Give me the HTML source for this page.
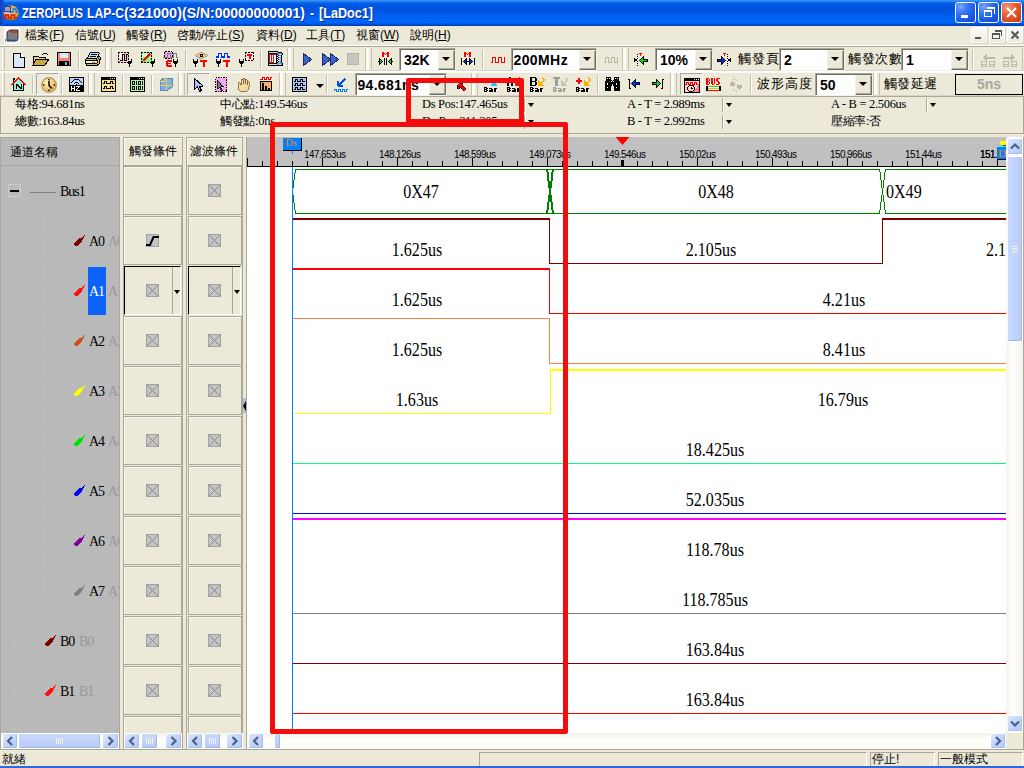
<!DOCTYPE html>
<html><head><meta charset="utf-8"><title>LAP-C</title><style>
*{margin:0;padding:0;box-sizing:border-box}
html,body{width:1024px;height:768px;overflow:hidden}
body{background:#ece9d8;position:relative;font-family:"Liberation Sans",sans-serif;font-size:12px;color:#000}
.a{position:absolute;white-space:nowrap}
.ser{font-family:"Liberation Serif",serif}
.sep{position:absolute;width:2px;border-left:1px solid #aca899;border-right:1px solid #fff}
.grip{position:absolute;width:3px;background:#fff;border-right:1px solid #c7c3b2}
.tend{position:absolute;width:1px;background:#c5c2b2}
.combo{position:absolute;background:#fff;border:1px solid;border-color:#aca899 #f4f2e8 #f4f2e8 #aca899;box-shadow:inset 1px 1px 0 #716f64}
.combo b{position:absolute;right:0;top:1px;bottom:0;width:17px;background:#ece9d8;border:1px solid;border-color:#f4f2e8 #716f64 #716f64 #f4f2e8;box-shadow:inset -1px -1px 0 #aca899}
.combo b:after{content:"";position:absolute;left:3px;top:6px;border-left:4px solid transparent;border-right:4px solid transparent;border-top:4px solid #000}
.combo i{position:absolute;left:4px;top:3px;font-style:normal;font-weight:bold;font-size:14px;line-height:16px}
.cell{position:absolute;background:#ece9d8;border:1px solid #aca899;box-shadow:inset 1px 1px 0 #fff}
.xb{position:absolute;width:13px;height:13px;background:#c3c3c3;border:1px dotted #7d7d7d}
.tl{position:absolute;font-family:"Liberation Serif",serif;font-size:14px;white-space:nowrap}
.info{position:absolute;font-family:"Liberation Serif",serif;font-size:12.5px;white-space:nowrap;letter-spacing:-0.3px}
.cjk{font-family:"Liberation Sans",sans-serif;font-size:12px}
.dd{position:absolute;width:0;height:0;border-left:4px solid transparent;border-right:4px solid transparent;border-top:4px solid #000}
.wl{position:absolute;font-family:"Liberation Serif",serif;font-size:16.5px;white-space:nowrap;transform:scaleX(.9);transform-origin:center}
.rl{position:absolute;font-family:"Liberation Sans",sans-serif;font-size:11px;letter-spacing:-0.6px;white-space:nowrap;transform:scaleX(.9);transform-origin:0 0;color:#000}
</style></head><body>
<div class="a" style="left:0;top:0;width:1024px;height:26px;background:linear-gradient(#4a94f8 0,#3088f6 1px,#0a6cf0 2.5px,#005ae6 4px,#0053dc 8px,#0055e2 12px,#0062f4 17px,#0066fb 22.5px,#0052d8 24px,#003cb0 26px)"></div>
<div class="a" style="left:0;top:0;width:4px;height:26px;background:linear-gradient(90deg,#0c3fb8,#0a55dc 3px)"></div>
<svg class="a" style="left:2px;top:4px" width="17" height="17" viewBox="0 0 17 17"><defs><radialGradient id="ball" cx="55%" cy="40%" r="60%"><stop offset="0" stop-color="#f0e070"/><stop offset=".7" stop-color="#c8a030"/><stop offset="1" stop-color="#806018"/></radialGradient></defs><circle cx="9" cy="9" r="7.8" fill="url(#ball)"/><rect x="2" y="2" width="7" height="7" fill="#404050"/><rect x="3" y="3" width="5" height="4" fill="#9898f0"/><rect x="2" y="8" width="6" height="2" fill="#c0c0c8"/><path d="M9 8h2V5h3v3h2" stroke="#1070ff" stroke-width="1.3" fill="none"/><path d="M0.5 14h3v-3h3v3h3v-3h3v3h3" stroke="#f01010" stroke-width="1.6" fill="none"/></svg>
<div class="a" style="left:22px;top:5px;color:#fff;font-weight:bold;font-size:14px;text-shadow:1px 1px 0 #0c2b8c;transform:scaleX(0.800);transform-origin:0 0">ZEROPLUS</div>
<div class="a" style="left:87px;top:5px;color:#fff;font-weight:bold;font-size:14px;text-shadow:1px 1px 0 #0c2b8c;transform:scaleX(0.865);transform-origin:0 0">LAP-C</div>
<div class="a" style="left:124px;top:5px;color:#fff;font-weight:bold;font-size:14px;text-shadow:1px 1px 0 #0c2b8c;transform:scaleX(1.035);transform-origin:0 0">(321000)</div>
<div class="a" style="left:182px;top:5px;color:#fff;font-weight:bold;font-size:14px;text-shadow:1px 1px 0 #0c2b8c;transform:scaleX(1.000);transform-origin:0 0">(S/N:00000000001)</div>
<div class="a" style="left:310px;top:5px;color:#fff;font-weight:bold;font-size:14px;text-shadow:1px 1px 0 #0c2b8c;transform:scaleX(0.857);transform-origin:0 0">-</div>
<div class="a" style="left:319px;top:5px;color:#fff;font-weight:bold;font-size:14px;text-shadow:1px 1px 0 #0c2b8c;transform:scaleX(0.901);transform-origin:0 0">[LaDoc1]</div>
<div class="a" style="left:955px;top:2px;width:21px;height:21px;border:1px solid #fff;border-radius:3px;background:radial-gradient(circle at 25% 20%,#7aa8ff 0,#3a78f4 30%,#1c5ae8 65%,#1448d0 100%)"></div>
<div class="a" style="left:978px;top:2px;width:21px;height:21px;border:1px solid #fff;border-radius:3px;background:radial-gradient(circle at 25% 20%,#7aa8ff 0,#3a78f4 30%,#1c5ae8 65%,#1448d0 100%)"></div>
<div class="a" style="left:1001px;top:2px;width:21px;height:21px;border:1px solid #fff;border-radius:3px;background:radial-gradient(circle at 30% 25%,#f0a080 0,#e8643c 35%,#d64a1e 70%,#c03c14 100%)"></div>
<div class="a" style="left:961px;top:15px;width:7px;height:3px;background:#fff"></div>
<div class="a" style="left:984px;top:10px;width:8px;height:7px;border:1px solid #fff;border-top-width:2px"></div>
<div class="a" style="left:987px;top:7px;width:8px;height:7px;border:1px solid #fff;border-top-width:2px;border-left:none;border-bottom:none"></div>
<svg class="a" style="left:1005px;top:6px" width="13" height="13" viewBox="0 0 13 13"><path d="M2 2L11 11M11 2L2 11" stroke="#fff" stroke-width="2"/></svg>
<div class="a" style="left:0;top:45px;width:1024px;height:1px;background:#fff"></div>
<div class="a" style="left:0;top:46px;width:1024px;height:1px;background:#aca899"></div>
<div class="a" style="left:4px;top:27px;width:16px;height:17px;background:#fff"></div>
<svg class="a" style="left:4px;top:27px" width="16" height="17" viewBox="0 0 16 17"><path d="M3 5l3-2h8v9l-2 2H3z" fill="#808080" stroke="#303030"/><path d="M6 3l1 2h7" stroke="#d00" fill="none"/><path d="M1 13h14" stroke="#00c" stroke-dasharray="1 2"/><path d="M1 15h14" stroke="#0cc" stroke-dasharray="1 3"/></svg>
<div class="a" style="left:25px;top:28px;font-size:12px;line-height:14px">檔案(<u>F</u>)</div>
<div class="a" style="left:75px;top:28px;font-size:12px;line-height:14px">信號(<u>U</u>)</div>
<div class="a" style="left:126px;top:28px;font-size:12px;line-height:14px">觸發(<u>R</u>)</div>
<div class="a" style="left:177px;top:28px;font-size:12px;line-height:14px">啓動/停止(<u>S</u>)</div>
<div class="a" style="left:256px;top:28px;font-size:12px;line-height:14px">資料(<u>D</u>)</div>
<div class="a" style="left:306px;top:28px;font-size:12px;line-height:14px">工具(<u>T</u>)</div>
<div class="a" style="left:356px;top:28px;font-size:12px;line-height:14px">視窗(<u>W</u>)</div>
<div class="a" style="left:410px;top:28px;font-size:12px;line-height:14px">說明(<u>H</u>)</div>
<div class="a" style="left:971px;top:27px;width:16px;height:16px;background:linear-gradient(#fbfbf8,#ece9de);border:1px solid #fff;border-radius:2px;box-shadow:1px 1px 0 #d8d4c4"></div>
<div class="a" style="left:989px;top:27px;width:16px;height:16px;background:linear-gradient(#fbfbf8,#ece9de);border:1px solid #fff;border-radius:2px;box-shadow:1px 1px 0 #d8d4c4"></div>
<div class="a" style="left:1007px;top:27px;width:16px;height:16px;background:linear-gradient(#fbfbf8,#ece9de);border:1px solid #fff;border-radius:2px;box-shadow:1px 1px 0 #d8d4c4"></div>
<div class="a" style="left:975px;top:37px;width:6px;height:2px;background:#555"></div>
<div class="a" style="left:992px;top:33px;width:8px;height:6px;border:1px solid #555;border-top-width:2px"></div>
<div class="a" style="left:995px;top:30px;width:7px;height:6px;border:1px solid #555;border-top-width:2px;border-left:none;border-bottom:none"></div>
<svg class="a" style="left:1010px;top:30px" width="10" height="10" viewBox="0 0 10 10"><path d="M1.5 1.5L8.5 8.5M8.5 1.5L1.5 8.5" stroke="#555" stroke-width="2"/></svg>
<div class="a" style="left:0;top:71px;width:1024px;height:1px;background:#fff"></div>
<div class="a" style="left:0;top:72px;width:1024px;height:1px;background:#fbfaf6"></div>
<div class="a" style="left:0;top:95px;width:1024px;height:1px;background:#d8d4c4"></div>
<div class="a" style="left:2px;top:48px;width:1px;height:22px;background:#fbfaf6"></div><div class="a" style="left:4px;top:48px;width:1px;height:22px;background:#c5c2b2"></div>
<div class="a" style="left:2px;top:73px;width:1px;height:22px;background:#fbfaf6"></div><div class="a" style="left:4px;top:73px;width:1px;height:22px;background:#c5c2b2"></div>
<div class="a" style="left:105px;top:48px;width:1px;height:22px;background:#c5c2b2"></div>
<div class="a" style="left:106px;top:48px;width:3px;height:22px;background:#fbfaf6"></div>
<div class="a" style="left:111px;top:48px;width:1px;height:22px;background:#c5c2b2"></div>
<div class="a" style="left:287px;top:48px;width:1px;height:22px;background:#c5c2b2"></div>
<div class="a" style="left:288px;top:48px;width:3px;height:22px;background:#fbfaf6"></div>
<div class="a" style="left:293px;top:48px;width:1px;height:22px;background:#c5c2b2"></div>
<div class="a" style="left:365px;top:48px;width:1px;height:22px;background:#c5c2b2"></div>
<div class="a" style="left:366px;top:48px;width:3px;height:22px;background:#fbfaf6"></div>
<div class="a" style="left:371px;top:48px;width:1px;height:22px;background:#c5c2b2"></div>
<div class="a" style="left:622px;top:48px;width:1px;height:22px;background:#c5c2b2"></div>
<div class="a" style="left:623px;top:48px;width:3px;height:22px;background:#fbfaf6"></div>
<div class="a" style="left:628px;top:48px;width:1px;height:22px;background:#c5c2b2"></div>
<div class="a" style="left:1022px;top:48px;width:1px;height:22px;background:#c5c2b2"></div>
<div class="a" style="left:78px;top:50px;width:1px;height:19px;background:#c5c2b2"></div>
<div class="a" style="left:79px;top:50px;width:1px;height:19px;background:#fff"></div>
<div class="a" style="left:185px;top:50px;width:1px;height:19px;background:#c5c2b2"></div>
<div class="a" style="left:186px;top:50px;width:1px;height:19px;background:#fff"></div>
<div class="a" style="left:260px;top:50px;width:1px;height:19px;background:#c5c2b2"></div>
<div class="a" style="left:261px;top:50px;width:1px;height:19px;background:#fff"></div>
<div class="a" style="left:482px;top:50px;width:1px;height:19px;background:#c5c2b2"></div>
<div class="a" style="left:483px;top:50px;width:1px;height:19px;background:#fff"></div>
<div class="a" style="left:972px;top:50px;width:1px;height:19px;background:#c5c2b2"></div>
<div class="a" style="left:973px;top:50px;width:1px;height:19px;background:#fff"></div>
<div class="a" style="left:0;top:70px;width:1024px;height:1px;background:#d8d4c4"></div>
<div class="a" style="left:88px;top:73px;width:1px;height:22px;background:#c5c2b2"></div>
<div class="a" style="left:89px;top:73px;width:3px;height:22px;background:#fbfaf6"></div>
<div class="a" style="left:94px;top:73px;width:1px;height:22px;background:#c5c2b2"></div>
<div class="a" style="left:178px;top:73px;width:1px;height:22px;background:#c5c2b2"></div>
<div class="a" style="left:179px;top:73px;width:3px;height:22px;background:#fbfaf6"></div>
<div class="a" style="left:184px;top:73px;width:1px;height:22px;background:#c5c2b2"></div>
<div class="a" style="left:279px;top:73px;width:1px;height:22px;background:#c5c2b2"></div>
<div class="a" style="left:280px;top:73px;width:3px;height:22px;background:#fbfaf6"></div>
<div class="a" style="left:285px;top:73px;width:1px;height:22px;background:#c5c2b2"></div>
<div class="a" style="left:471px;top:73px;width:1px;height:22px;background:#c5c2b2"></div>
<div class="a" style="left:472px;top:73px;width:3px;height:22px;background:#fbfaf6"></div>
<div class="a" style="left:477px;top:73px;width:1px;height:22px;background:#c5c2b2"></div>
<div class="a" style="left:670px;top:73px;width:1px;height:22px;background:#c5c2b2"></div>
<div class="a" style="left:671px;top:73px;width:3px;height:22px;background:#fbfaf6"></div>
<div class="a" style="left:676px;top:73px;width:1px;height:22px;background:#c5c2b2"></div>
<div class="a" style="left:873px;top:73px;width:1px;height:22px;background:#c5c2b2"></div>
<div class="a" style="left:874px;top:73px;width:3px;height:22px;background:#fbfaf6"></div>
<div class="a" style="left:879px;top:73px;width:1px;height:22px;background:#c5c2b2"></div>
<div class="a" style="left:32px;top:75px;width:1px;height:19px;background:#c5c2b2"></div>
<div class="a" style="left:33px;top:75px;width:1px;height:19px;background:#fff"></div>
<div class="a" style="left:61px;top:75px;width:1px;height:19px;background:#c5c2b2"></div>
<div class="a" style="left:62px;top:75px;width:1px;height:19px;background:#fff"></div>
<div class="a" style="left:122px;top:75px;width:1px;height:19px;background:#c5c2b2"></div>
<div class="a" style="left:123px;top:75px;width:1px;height:19px;background:#fff"></div>
<div class="a" style="left:151px;top:75px;width:1px;height:19px;background:#c5c2b2"></div>
<div class="a" style="left:152px;top:75px;width:1px;height:19px;background:#fff"></div>
<div class="a" style="left:326px;top:75px;width:1px;height:19px;background:#c5c2b2"></div>
<div class="a" style="left:327px;top:75px;width:1px;height:19px;background:#fff"></div>
<div class="a" style="left:597px;top:75px;width:1px;height:19px;background:#c5c2b2"></div>
<div class="a" style="left:598px;top:75px;width:1px;height:19px;background:#fff"></div>
<div class="a" style="left:750px;top:75px;width:1px;height:19px;background:#c5c2b2"></div>
<div class="a" style="left:751px;top:75px;width:1px;height:19px;background:#fff"></div>
<svg class="a" style="left:127px;top:59px" width="6" height="8" shape-rendering="crispEdges"><rect x="0" y="0" width="1" height="3" fill="#000"/><rect x="4" y="0" width="1" height="3" fill="#000"/><rect x="0" y="2" width="5" height="2" fill="#000"/><rect x="1" y="4" width="3" height="1" fill="#000"/><rect x="2" y="4" width="1" height="4" fill="#000"/></svg>
<svg class="a" style="left:150px;top:59px" width="6" height="8" shape-rendering="crispEdges"><rect x="0" y="0" width="1" height="3" fill="#000"/><rect x="4" y="0" width="1" height="3" fill="#000"/><rect x="0" y="2" width="5" height="2" fill="#000"/><rect x="1" y="4" width="3" height="1" fill="#000"/><rect x="2" y="4" width="1" height="4" fill="#000"/></svg>
<svg class="a" style="left:173px;top:59px" width="6" height="8" shape-rendering="crispEdges"><rect x="0" y="0" width="1" height="3" fill="#000"/><rect x="4" y="0" width="1" height="3" fill="#000"/><rect x="0" y="2" width="5" height="2" fill="#000"/><rect x="1" y="4" width="3" height="1" fill="#000"/><rect x="2" y="4" width="1" height="4" fill="#000"/></svg>
<svg class="a" style="left:193px;top:59px" width="6" height="8" shape-rendering="crispEdges"><rect x="0" y="0" width="1" height="3" fill="#000"/><rect x="4" y="0" width="1" height="3" fill="#000"/><rect x="0" y="2" width="5" height="2" fill="#000"/><rect x="1" y="4" width="3" height="1" fill="#000"/><rect x="2" y="4" width="1" height="4" fill="#000"/></svg>
<svg class="a" style="left:216px;top:59px" width="6" height="8" shape-rendering="crispEdges"><rect x="0" y="0" width="1" height="3" fill="#000"/><rect x="4" y="0" width="1" height="3" fill="#000"/><rect x="0" y="2" width="5" height="2" fill="#000"/><rect x="1" y="4" width="3" height="1" fill="#000"/><rect x="2" y="4" width="1" height="4" fill="#000"/></svg>
<svg class="a" style="left:239px;top:59px" width="6" height="8" shape-rendering="crispEdges"><rect x="0" y="0" width="1" height="3" fill="#000"/><rect x="4" y="0" width="1" height="3" fill="#000"/><rect x="0" y="2" width="5" height="2" fill="#000"/><rect x="1" y="4" width="3" height="1" fill="#000"/><rect x="2" y="4" width="1" height="4" fill="#000"/></svg>
<svg class="a" style="left:13px;top:53px" width="12" height="15" viewBox="0 0 12 15" shape-rendering="crispEdges"><path d="M0.5 0.5h7l4 4v10h-11z" fill="#dce6fb" stroke="#000"/><path d="M7.5 0.5v4h4" fill="#fff" stroke="#000"/></svg>
<svg class="a" style="left:32px;top:52px" width="18" height="14" viewBox="0 0 18 14" shape-rendering="crispEdges"><path d="M1 4h5l1 1h6v2H4L1 13z" fill="#e8d080" stroke="#000"/><path d="M4 7h13l-4 6H1z" fill="#c8a840" stroke="#000"/><path d="M10 3q3-3 6 0" stroke="#000" fill="none"/></svg>
<svg class="a" style="left:57px;top:52px" width="14" height="14" viewBox="0 0 14 14" shape-rendering="crispEdges"><rect x="0.5" y="0.5" width="13" height="13" fill="#f08080" stroke="#000"/><rect x="3" y="1" width="8" height="5" fill="#dde8f0"/><rect x="2" y="9" width="10" height="5" fill="#000"/><rect x="8" y="10" width="2" height="3" fill="#60c0e0"/></svg>
<svg class="a" style="left:85px;top:52px" width="16" height="14" shape-rendering="crispEdges"><rect x="5" y="0" width="9" height="1" fill="#000"/><rect x="4" y="1" width="1" height="1" fill="#000"/><rect x="5" y="1" width="9" height="1" fill="#b8e0f8"/><rect x="14" y="1" width="1" height="1" fill="#000"/><rect x="4" y="2" width="1" height="1" fill="#000"/><rect x="5" y="2" width="1" height="1" fill="#b8e0f8"/><rect x="6" y="2" width="6" height="1" fill="#000"/><rect x="12" y="2" width="1" height="1" fill="#b8e0f8"/><rect x="13" y="2" width="1" height="1" fill="#000"/><rect x="3" y="3" width="1" height="1" fill="#000"/><rect x="4" y="3" width="9" height="1" fill="#b8e0f8"/><rect x="13" y="3" width="1" height="1" fill="#000"/><rect x="3" y="4" width="1" height="1" fill="#000"/><rect x="4" y="4" width="1" height="1" fill="#b8e0f8"/><rect x="5" y="4" width="6" height="1" fill="#000"/><rect x="11" y="4" width="1" height="1" fill="#b8e0f8"/><rect x="12" y="4" width="3" height="1" fill="#000"/><rect x="2" y="5" width="1" height="1" fill="#000"/><rect x="3" y="5" width="9" height="1" fill="#b8e0f8"/><rect x="12" y="5" width="1" height="1" fill="#000"/><rect x="13" y="5" width="2" height="1" fill="#d0b860"/><rect x="15" y="5" width="1" height="1" fill="#000"/><rect x="1" y="6" width="11" height="1" fill="#000"/><rect x="12" y="6" width="1" height="1" fill="#d0b860"/><rect x="13" y="6" width="1" height="1" fill="#000"/><rect x="14" y="6" width="1" height="1" fill="#d0b860"/><rect x="15" y="6" width="1" height="1" fill="#000"/><rect x="0" y="7" width="1" height="1" fill="#000"/><rect x="1" y="7" width="10" height="1" fill="#d0b860"/><rect x="11" y="7" width="1" height="1" fill="#000"/><rect x="12" y="7" width="2" height="1" fill="#d0b860"/><rect x="14" y="7" width="2" height="1" fill="#000"/><rect x="0" y="8" width="13" height="1" fill="#000"/><rect x="13" y="8" width="1" height="1" fill="#d0b860"/><rect x="14" y="8" width="1" height="1" fill="#000"/><rect x="0" y="9" width="1" height="1" fill="#000"/><rect x="1" y="9" width="11" height="1" fill="#fff8d8"/><rect x="12" y="9" width="1" height="1" fill="#000"/><rect x="13" y="9" width="1" height="1" fill="#d0b860"/><rect x="14" y="9" width="1" height="1" fill="#000"/><rect x="0" y="10" width="1" height="1" fill="#000"/><rect x="1" y="10" width="6" height="1" fill="#fff8d8"/><rect x="7" y="10" width="1" height="1" fill="#10d010"/><rect x="8" y="10" width="1" height="1" fill="#d0b860"/><rect x="9" y="10" width="1" height="1" fill="#ff0000"/><rect x="10" y="10" width="2" height="1" fill="#fff8d8"/><rect x="12" y="10" width="1" height="1" fill="#000"/><rect x="13" y="10" width="1" height="1" fill="#d0b860"/><rect x="14" y="10" width="1" height="1" fill="#000"/><rect x="0" y="11" width="12" height="1" fill="#000"/><rect x="12" y="11" width="2" height="1" fill="#d0b860"/><rect x="14" y="11" width="1" height="1" fill="#000"/><rect x="1" y="12" width="1" height="1" fill="#000"/><rect x="2" y="12" width="10" height="1" fill="#d0b860"/><rect x="12" y="12" width="2" height="1" fill="#000"/><rect x="1" y="13" width="12" height="1" fill="#000"/></svg>
<svg class="a" style="left:118px;top:52px" width="11" height="11" viewBox="0 0 11 11" shape-rendering="crispEdges"><rect x="0" y="0" width="11" height="11" fill="#f8c8c8"/><rect x="1" y="1" width="5" height="5" fill="#fff0f0"/><path d="M0 0.5h11M0 10.5h11M0.5 0v11M10.5 0v11" stroke="#000" stroke-dasharray="2 1"/><path d="M2 8.5h2.5V2.5h2v6h2V2.5h1.5" stroke="#000" fill="none"/></svg>
<svg class="a" style="left:141px;top:52px" width="11" height="11" viewBox="0 0 11 11" shape-rendering="crispEdges"><rect x="0" y="0" width="11" height="11" fill="#90f090"/><rect x="1" y="1" width="5" height="4" fill="#d0ffd0"/><path d="M0 0.5h11M0 10.5h11M0.5 0v11M10.5 0v11" stroke="#000" stroke-dasharray="2 1"/><path d="M9 2L7 4" stroke="#f00" stroke-width="1.5"/><path d="M7 3L3 7 2 9 4 8 8 4z" fill="#f00" stroke="#f00"/></svg>
<svg class="a" style="left:163px;top:51px" width="16" height="16" viewBox="0 0 16 16" shape-rendering="crispEdges"><rect x="2" y="1" width="7" height="7" fill="#e8a8f8"/><path d="M2 0.5h7M2 7.5h7M1.5 1v6M9.5 1v6" stroke="#000" stroke-dasharray="2 1"/><path d="M0 6.5h4V2.5h3v4h3V2.5h3v4h2" stroke="#808080" fill="none"/><path d="M4 10h5M4 10v5M4 12.5h4M4 15h5" stroke="#f00" stroke-width="1.6" fill="none"/></svg>
<svg class="a" style="left:195px;top:52px" width="13" height="7" viewBox="0 0 13 7" shape-rendering="crispEdges"><path d="M0 3.5L6.5 0 13 3.5 6.5 7z" fill="#f8c860" stroke="#a0a0a0"/><rect x="5" y="2" width="3" height="3" fill="#000"/><rect x="6" y="3" width="1" height="1" fill="#f8c860"/></svg>
<svg class="a" style="left:200px;top:60px" width="7" height="7" viewBox="0 0 7 7" shape-rendering="crispEdges"><rect x="0" y="0" width="7" height="2" fill="#f00"/><rect x="2.5" y="0" width="2" height="7" fill="#f00"/></svg>
<svg class="a" style="left:216px;top:53px" width="14" height="5" viewBox="0 0 14 5" shape-rendering="crispEdges"><path d="M0 4h2.5V0.5h3V4h3V0.5h3V4H14" stroke="#0030ff" stroke-width="1.5" fill="none"/></svg>
<svg class="a" style="left:223px;top:60px" width="7" height="7" viewBox="0 0 7 7" shape-rendering="crispEdges"><rect x="0" y="0" width="7" height="2" fill="#f00"/><rect x="2.5" y="0" width="2" height="7" fill="#f00"/></svg>
<svg class="a" style="left:245px;top:52px" width="9" height="9" viewBox="0 0 9 9" shape-rendering="crispEdges"><rect x="0" y="0" width="9" height="9" fill="#fde8e8"/><path d="M0 0.5h9M0 8.5h9M0.5 0v9M8.5 0v9" stroke="#000" stroke-dasharray="2 1"/><rect x="2" y="2" width="5" height="2" fill="#f00"/><rect x="3.5" y="2" width="2" height="5" fill="#f00"/></svg>
<svg class="a" style="left:268px;top:51px" width="15" height="15" shape-rendering="crispEdges"><rect x="0" y="0" width="10" height="1" fill="#000"/><rect x="0" y="1" width="1" height="1" fill="#000"/><rect x="1" y="1" width="8" height="1" fill="#c8e8f8"/><rect x="9" y="1" width="1" height="1" fill="#6898d0"/><rect x="10" y="1" width="4" height="1" fill="#000"/><rect x="0" y="2" width="9" height="1" fill="#000"/><rect x="9" y="2" width="5" height="1" fill="#6898d0"/><rect x="14" y="2" width="1" height="1" fill="#000"/><rect x="0" y="3" width="1" height="1" fill="#000"/><rect x="1" y="3" width="7" height="1" fill="#ff0000"/><rect x="8" y="3" width="2" height="1" fill="#000"/><rect x="10" y="3" width="1" height="1" fill="#6898d0"/><rect x="11" y="3" width="2" height="1" fill="#c8e8f8"/><rect x="13" y="3" width="1" height="1" fill="#6898d0"/><rect x="14" y="3" width="1" height="1" fill="#000"/><rect x="0" y="4" width="1" height="1" fill="#000"/><rect x="1" y="4" width="1" height="1" fill="#ff0000"/><rect x="2" y="4" width="1" height="1" fill="#fff"/><rect x="3" y="4" width="1" height="1" fill="#ff0000"/><rect x="4" y="4" width="1" height="1" fill="#fff"/><rect x="5" y="4" width="1" height="1" fill="#ff0000"/><rect x="6" y="4" width="2" height="1" fill="#fff"/><rect x="8" y="4" width="1" height="1" fill="#000"/><rect x="10" y="4" width="1" height="1" fill="#000"/><rect x="11" y="4" width="2" height="1" fill="#6898d0"/><rect x="13" y="4" width="1" height="1" fill="#000"/><rect x="0" y="5" width="1" height="1" fill="#000"/><rect x="1" y="5" width="1" height="1" fill="#ff0000"/><rect x="2" y="5" width="1" height="1" fill="#fff"/><rect x="3" y="5" width="1" height="1" fill="#ff0000"/><rect x="4" y="5" width="1" height="1" fill="#fff"/><rect x="5" y="5" width="1" height="1" fill="#ff0000"/><rect x="6" y="5" width="2" height="1" fill="#fff"/><rect x="8" y="5" width="2" height="1" fill="#000"/><rect x="10" y="5" width="3" height="1" fill="#c8e8f8"/><rect x="13" y="5" width="1" height="1" fill="#000"/><rect x="0" y="6" width="1" height="1" fill="#000"/><rect x="1" y="6" width="1" height="1" fill="#ff0000"/><rect x="2" y="6" width="1" height="1" fill="#fff"/><rect x="3" y="6" width="1" height="1" fill="#ff0000"/><rect x="4" y="6" width="1" height="1" fill="#fff"/><rect x="5" y="6" width="1" height="1" fill="#ff0000"/><rect x="6" y="6" width="2" height="1" fill="#fff"/><rect x="8" y="6" width="1" height="1" fill="#000"/><rect x="10" y="6" width="1" height="1" fill="#000"/><rect x="11" y="6" width="2" height="1" fill="#6898d0"/><rect x="13" y="6" width="1" height="1" fill="#000"/><rect x="0" y="7" width="1" height="1" fill="#000"/><rect x="1" y="7" width="1" height="1" fill="#ff0000"/><rect x="2" y="7" width="1" height="1" fill="#fff"/><rect x="3" y="7" width="1" height="1" fill="#ff0000"/><rect x="4" y="7" width="1" height="1" fill="#fff"/><rect x="5" y="7" width="1" height="1" fill="#ff0000"/><rect x="6" y="7" width="2" height="1" fill="#fff"/><rect x="8" y="7" width="2" height="1" fill="#000"/><rect x="10" y="7" width="3" height="1" fill="#c8e8f8"/><rect x="13" y="7" width="1" height="1" fill="#000"/><rect x="0" y="8" width="1" height="1" fill="#000"/><rect x="1" y="8" width="1" height="1" fill="#ff0000"/><rect x="2" y="8" width="1" height="1" fill="#fff"/><rect x="3" y="8" width="1" height="1" fill="#ff0000"/><rect x="4" y="8" width="1" height="1" fill="#fff"/><rect x="5" y="8" width="1" height="1" fill="#ff0000"/><rect x="6" y="8" width="2" height="1" fill="#fff"/><rect x="8" y="8" width="1" height="1" fill="#000"/><rect x="10" y="8" width="1" height="1" fill="#000"/><rect x="11" y="8" width="2" height="1" fill="#6898d0"/><rect x="13" y="8" width="1" height="1" fill="#000"/><rect x="0" y="9" width="1" height="1" fill="#000"/><rect x="1" y="9" width="1" height="1" fill="#ff0000"/><rect x="2" y="9" width="1" height="1" fill="#fff"/><rect x="3" y="9" width="1" height="1" fill="#ff0000"/><rect x="4" y="9" width="1" height="1" fill="#fff"/><rect x="5" y="9" width="1" height="1" fill="#ff0000"/><rect x="6" y="9" width="2" height="1" fill="#fff"/><rect x="8" y="9" width="2" height="1" fill="#000"/><rect x="10" y="9" width="3" height="1" fill="#c8e8f8"/><rect x="13" y="9" width="1" height="1" fill="#000"/><rect x="0" y="10" width="1" height="1" fill="#000"/><rect x="1" y="10" width="1" height="1" fill="#ff0000"/><rect x="2" y="10" width="1" height="1" fill="#fff"/><rect x="3" y="10" width="1" height="1" fill="#ff0000"/><rect x="4" y="10" width="1" height="1" fill="#fff"/><rect x="5" y="10" width="1" height="1" fill="#ff0000"/><rect x="6" y="10" width="2" height="1" fill="#fff"/><rect x="8" y="10" width="1" height="1" fill="#000"/><rect x="10" y="10" width="1" height="1" fill="#000"/><rect x="11" y="10" width="2" height="1" fill="#6898d0"/><rect x="13" y="10" width="1" height="1" fill="#000"/><rect x="0" y="11" width="1" height="1" fill="#000"/><rect x="1" y="11" width="5" height="1" fill="#ff0000"/><rect x="6" y="11" width="2" height="1" fill="#fff"/><rect x="8" y="11" width="2" height="1" fill="#000"/><rect x="10" y="11" width="1" height="1" fill="#6898d0"/><rect x="11" y="11" width="1" height="1" fill="#c8e8f8"/><rect x="12" y="11" width="1" height="1" fill="#6898d0"/><rect x="13" y="11" width="1" height="1" fill="#000"/><rect x="0" y="12" width="9" height="1" fill="#000"/><rect x="9" y="12" width="5" height="1" fill="#6898d0"/><rect x="14" y="12" width="1" height="1" fill="#000"/><rect x="0" y="13" width="1" height="1" fill="#000"/><rect x="1" y="13" width="8" height="1" fill="#c8e8f8"/><rect x="9" y="13" width="2" height="1" fill="#6898d0"/><rect x="11" y="13" width="2" height="1" fill="#c8e8f8"/><rect x="13" y="13" width="1" height="1" fill="#6898d0"/><rect x="14" y="13" width="1" height="1" fill="#000"/><rect x="0" y="14" width="15" height="1" fill="#000"/></svg>
<svg class="a" style="left:303px;top:53px" width="9" height="13" viewBox="0 0 9 13" shape-rendering="crispEdges"><path d="M0.5 0.5L8.5 6.5L0.5 12.5z" fill="#3c64c8" stroke="#1a2a70"/></svg>
<svg class="a" style="left:322px;top:53px" width="18" height="13" viewBox="0 0 18 13" shape-rendering="crispEdges"><path d="M0.5 0.5L8.5 6.5L0.5 12.5z" fill="#3c64c8" stroke="#1a2a70"/><path d="M8.5 0.5L16.5 6.5L8.5 12.5z" fill="#3c64c8" stroke="#1a2a70"/></svg>
<svg class="a" style="left:347px;top:53px" width="12" height="12" viewBox="0 0 12 12" shape-rendering="crispEdges"><rect x="0.5" y="0.5" width="11" height="11" fill="#c8c6bc" stroke="#b8b6aa"/></svg>
<svg class="a" style="left:378px;top:52px" width="15" height="13" shape-rendering="crispEdges"><rect x="4" y="0" width="2" height="1" fill="#ff0000"/><rect x="9" y="0" width="2" height="1" fill="#ff0000"/><rect x="4" y="1" width="3" height="1" fill="#ff0000"/><rect x="8" y="1" width="3" height="1" fill="#ff0000"/><rect x="4" y="2" width="2" height="1" fill="#ff0000"/><rect x="7" y="2" width="1" height="1" fill="#ff0000"/><rect x="9" y="2" width="2" height="1" fill="#ff0000"/><rect x="4" y="3" width="2" height="1" fill="#ff0000"/><rect x="9" y="3" width="2" height="1" fill="#ff0000"/><rect x="4" y="4" width="2" height="1" fill="#ff0000"/><rect x="9" y="4" width="2" height="1" fill="#ff0000"/><rect x="1" y="6" width="1" height="1" fill="#000"/><rect x="6" y="6" width="1" height="1" fill="#000"/><rect x="8" y="6" width="1" height="1" fill="#000"/><rect x="13" y="6" width="1" height="1" fill="#000"/><rect x="1" y="7" width="2" height="1" fill="#000"/><rect x="6" y="7" width="1" height="1" fill="#000"/><rect x="8" y="7" width="1" height="1" fill="#000"/><rect x="12" y="7" width="2" height="1" fill="#000"/><rect x="1" y="8" width="1" height="1" fill="#000"/><rect x="2" y="8" width="1" height="1" fill="#00e000"/><rect x="3" y="8" width="1" height="1" fill="#000"/><rect x="6" y="8" width="1" height="1" fill="#000"/><rect x="8" y="8" width="1" height="1" fill="#000"/><rect x="11" y="8" width="1" height="1" fill="#000"/><rect x="12" y="8" width="1" height="1" fill="#00e000"/><rect x="13" y="8" width="1" height="1" fill="#000"/><rect x="0" y="9" width="2" height="1" fill="#000"/><rect x="2" y="9" width="2" height="1" fill="#00e000"/><rect x="4" y="9" width="1" height="1" fill="#000"/><rect x="6" y="9" width="1" height="1" fill="#000"/><rect x="8" y="9" width="1" height="1" fill="#000"/><rect x="10" y="9" width="1" height="1" fill="#000"/><rect x="11" y="9" width="2" height="1" fill="#00e000"/><rect x="13" y="9" width="2" height="1" fill="#000"/><rect x="1" y="10" width="1" height="1" fill="#000"/><rect x="2" y="10" width="1" height="1" fill="#00e000"/><rect x="3" y="10" width="1" height="1" fill="#000"/><rect x="6" y="10" width="1" height="1" fill="#000"/><rect x="8" y="10" width="1" height="1" fill="#000"/><rect x="11" y="10" width="1" height="1" fill="#000"/><rect x="12" y="10" width="1" height="1" fill="#00e000"/><rect x="13" y="10" width="1" height="1" fill="#000"/><rect x="1" y="11" width="2" height="1" fill="#000"/><rect x="6" y="11" width="1" height="1" fill="#000"/><rect x="8" y="11" width="1" height="1" fill="#000"/><rect x="12" y="11" width="2" height="1" fill="#000"/><rect x="1" y="12" width="1" height="1" fill="#000"/><rect x="6" y="12" width="1" height="1" fill="#000"/><rect x="8" y="12" width="1" height="1" fill="#000"/><rect x="13" y="12" width="1" height="1" fill="#000"/></svg>
<div class="combo" style="left:399px;top:48px;width:57px;height:23px"><i style="font-weight:bold;left:4px;letter-spacing:0px">32K</i><b></b></div>
<svg class="a" style="left:461px;top:52px" width="14" height="13" shape-rendering="crispEdges"><rect x="3" y="0" width="2" height="1" fill="#ff0000"/><rect x="8" y="0" width="2" height="1" fill="#ff0000"/><rect x="3" y="1" width="3" height="1" fill="#ff0000"/><rect x="7" y="1" width="3" height="1" fill="#ff0000"/><rect x="3" y="2" width="2" height="1" fill="#ff0000"/><rect x="6" y="2" width="1" height="1" fill="#ff0000"/><rect x="8" y="2" width="2" height="1" fill="#ff0000"/><rect x="3" y="3" width="2" height="1" fill="#ff0000"/><rect x="8" y="3" width="2" height="1" fill="#ff0000"/><rect x="3" y="4" width="2" height="1" fill="#ff0000"/><rect x="8" y="4" width="2" height="1" fill="#ff0000"/><rect x="0" y="6" width="1" height="1" fill="#000"/><rect x="5" y="6" width="1" height="1" fill="#000"/><rect x="8" y="6" width="1" height="1" fill="#000"/><rect x="13" y="6" width="1" height="1" fill="#000"/><rect x="0" y="7" width="1" height="1" fill="#000"/><rect x="4" y="7" width="2" height="1" fill="#000"/><rect x="8" y="7" width="2" height="1" fill="#000"/><rect x="13" y="7" width="1" height="1" fill="#000"/><rect x="0" y="8" width="1" height="1" fill="#000"/><rect x="3" y="8" width="1" height="1" fill="#000"/><rect x="4" y="8" width="1" height="1" fill="#0030ff"/><rect x="5" y="8" width="1" height="1" fill="#000"/><rect x="8" y="8" width="1" height="1" fill="#000"/><rect x="9" y="8" width="1" height="1" fill="#0030ff"/><rect x="10" y="8" width="1" height="1" fill="#000"/><rect x="13" y="8" width="1" height="1" fill="#000"/><rect x="0" y="9" width="1" height="1" fill="#000"/><rect x="2" y="9" width="1" height="1" fill="#000"/><rect x="3" y="9" width="2" height="1" fill="#0030ff"/><rect x="5" y="9" width="4" height="1" fill="#000"/><rect x="9" y="9" width="2" height="1" fill="#0030ff"/><rect x="11" y="9" width="1" height="1" fill="#000"/><rect x="13" y="9" width="1" height="1" fill="#000"/><rect x="0" y="10" width="1" height="1" fill="#000"/><rect x="3" y="10" width="1" height="1" fill="#000"/><rect x="4" y="10" width="1" height="1" fill="#0030ff"/><rect x="5" y="10" width="1" height="1" fill="#000"/><rect x="8" y="10" width="1" height="1" fill="#000"/><rect x="9" y="10" width="1" height="1" fill="#0030ff"/><rect x="10" y="10" width="1" height="1" fill="#000"/><rect x="13" y="10" width="1" height="1" fill="#000"/><rect x="0" y="11" width="1" height="1" fill="#000"/><rect x="4" y="11" width="2" height="1" fill="#000"/><rect x="8" y="11" width="2" height="1" fill="#000"/><rect x="13" y="11" width="1" height="1" fill="#000"/><rect x="0" y="12" width="1" height="1" fill="#000"/><rect x="5" y="12" width="1" height="1" fill="#000"/><rect x="8" y="12" width="1" height="1" fill="#000"/><rect x="13" y="12" width="1" height="1" fill="#000"/></svg>
<svg class="a" style="left:490px;top:57px" width="15" height="6" viewBox="0 0 15 6" shape-rendering="crispEdges"><path d="M0 5h2V0h3v5h3V0h3v5h3V0h1" stroke="#ff0000" fill="none" transform="translate(0.5 0.5)"/></svg>
<div class="combo" style="left:511px;top:48px;width:86px;height:23px"><i style="font-weight:bold;left:1.5px;letter-spacing:0.4px">200MHz</i><b></b></div>
<svg class="a" style="left:603px;top:57px" width="15" height="6" viewBox="0 0 15 6" shape-rendering="crispEdges"><path d="M0 5h2V0h3v5h3V0h3v5h3V0h1" stroke="#b8b6a8" fill="none" transform="translate(0.5 0.5)"/></svg>
<svg class="a" style="left:632px;top:50px" width="16" height="17" shape-rendering="crispEdges"><rect x="7" y="3" width="3" height="1" fill="#ff0000"/><rect x="5" y="4" width="1" height="1" fill="#000"/><rect x="8" y="4" width="1" height="1" fill="#ff0000"/><rect x="8" y="5" width="1" height="1" fill="#ff0000"/><rect x="5" y="6" width="1" height="1" fill="#000"/><rect x="11" y="6" width="1" height="1" fill="#000"/><rect x="10" y="7" width="2" height="1" fill="#000"/><rect x="2" y="8" width="1" height="1" fill="#000"/><rect x="5" y="8" width="1" height="1" fill="#000"/><rect x="9" y="8" width="1" height="1" fill="#000"/><rect x="10" y="8" width="1" height="1" fill="#00e000"/><rect x="11" y="8" width="1" height="1" fill="#000"/><rect x="2" y="9" width="3" height="1" fill="#000"/><rect x="8" y="9" width="1" height="1" fill="#000"/><rect x="9" y="9" width="2" height="1" fill="#00e000"/><rect x="11" y="9" width="5" height="1" fill="#000"/><rect x="2" y="10" width="3" height="1" fill="#000"/><rect x="7" y="10" width="1" height="1" fill="#000"/><rect x="8" y="10" width="7" height="1" fill="#00e000"/><rect x="15" y="10" width="1" height="1" fill="#000"/><rect x="2" y="11" width="1" height="1" fill="#000"/><rect x="5" y="11" width="1" height="1" fill="#000"/><rect x="8" y="11" width="1" height="1" fill="#000"/><rect x="9" y="11" width="2" height="1" fill="#00e000"/><rect x="11" y="11" width="5" height="1" fill="#000"/><rect x="9" y="12" width="1" height="1" fill="#000"/><rect x="10" y="12" width="1" height="1" fill="#00e000"/><rect x="11" y="12" width="1" height="1" fill="#000"/><rect x="5" y="13" width="1" height="1" fill="#000"/><rect x="10" y="13" width="2" height="1" fill="#000"/><rect x="11" y="14" width="1" height="1" fill="#000"/><rect x="5" y="15" width="1" height="1" fill="#000"/></svg>
<div class="combo" style="left:655px;top:48px;width:58px;height:23px"><i style="font-weight:bold;left:4px;letter-spacing:0px">10%</i><b></b></div>
<svg class="a" style="left:717px;top:50px" width="16" height="17" shape-rendering="crispEdges"><rect x="6" y="3" width="3" height="1" fill="#ff0000"/><rect x="7" y="4" width="1" height="1" fill="#ff0000"/><rect x="10" y="4" width="1" height="1" fill="#000"/><rect x="7" y="5" width="1" height="1" fill="#ff0000"/><rect x="4" y="6" width="1" height="1" fill="#000"/><rect x="10" y="6" width="1" height="1" fill="#000"/><rect x="4" y="7" width="2" height="1" fill="#000"/><rect x="4" y="8" width="1" height="1" fill="#000"/><rect x="5" y="8" width="1" height="1" fill="#0030ff"/><rect x="6" y="8" width="1" height="1" fill="#000"/><rect x="10" y="8" width="1" height="1" fill="#000"/><rect x="13" y="8" width="1" height="1" fill="#000"/><rect x="0" y="9" width="5" height="1" fill="#000"/><rect x="5" y="9" width="2" height="1" fill="#0030ff"/><rect x="7" y="9" width="1" height="1" fill="#000"/><rect x="11" y="9" width="3" height="1" fill="#000"/><rect x="0" y="10" width="1" height="1" fill="#000"/><rect x="1" y="10" width="7" height="1" fill="#0030ff"/><rect x="8" y="10" width="1" height="1" fill="#000"/><rect x="11" y="10" width="3" height="1" fill="#000"/><rect x="0" y="11" width="5" height="1" fill="#000"/><rect x="5" y="11" width="2" height="1" fill="#0030ff"/><rect x="7" y="11" width="1" height="1" fill="#000"/><rect x="10" y="11" width="1" height="1" fill="#000"/><rect x="13" y="11" width="1" height="1" fill="#000"/><rect x="4" y="12" width="1" height="1" fill="#000"/><rect x="5" y="12" width="1" height="1" fill="#0030ff"/><rect x="6" y="12" width="1" height="1" fill="#000"/><rect x="4" y="13" width="2" height="1" fill="#000"/><rect x="10" y="13" width="1" height="1" fill="#000"/><rect x="4" y="14" width="1" height="1" fill="#000"/><rect x="10" y="15" width="1" height="1" fill="#000"/></svg>
<div class="a" style="left:738px;top:52px;font-size:13px;line-height:14px;letter-spacing:0.8px">觸發頁</div>
<div class="combo" style="left:779px;top:48px;width:66px;height:23px"><i style="font-weight:bold;left:4px;letter-spacing:0px">2</i><b></b></div>
<div class="a" style="left:848px;top:52px;font-size:13px;line-height:14px;letter-spacing:0.7px">觸發次數</div>
<div class="combo" style="left:901px;top:48px;width:68px;height:23px"><i style="font-weight:bold;left:4px;letter-spacing:0px">1</i><b></b></div>
<svg class="a" style="left:981px;top:54px" width="14" height="13" shape-rendering="crispEdges"><rect x="5" y="0" width="1" height="1" fill="#bcbab0"/><rect x="4" y="1" width="2" height="1" fill="#bcbab0"/><rect x="3" y="2" width="3" height="1" fill="#bcbab0"/><rect x="2" y="3" width="12" height="1" fill="#bcbab0"/><rect x="3" y="4" width="11" height="1" fill="#bcbab0"/><rect x="4" y="5" width="2" height="1" fill="#bcbab0"/><rect x="5" y="6" width="1" height="1" fill="#bcbab0"/><rect x="0" y="7" width="6" height="1" fill="#bcbab0"/><rect x="8" y="7" width="6" height="1" fill="#bcbab0"/><rect x="0" y="8" width="1" height="1" fill="#bcbab0"/><rect x="5" y="8" width="1" height="1" fill="#bcbab0"/><rect x="8" y="8" width="1" height="1" fill="#bcbab0"/><rect x="13" y="8" width="1" height="1" fill="#bcbab0"/><rect x="0" y="9" width="1" height="1" fill="#bcbab0"/><rect x="5" y="9" width="1" height="1" fill="#bcbab0"/><rect x="8" y="9" width="1" height="1" fill="#bcbab0"/><rect x="13" y="9" width="1" height="1" fill="#bcbab0"/><rect x="0" y="10" width="6" height="1" fill="#bcbab0"/><rect x="8" y="10" width="6" height="1" fill="#bcbab0"/><rect x="0" y="11" width="1" height="1" fill="#bcbab0"/><rect x="5" y="11" width="1" height="1" fill="#bcbab0"/><rect x="8" y="11" width="1" height="1" fill="#bcbab0"/><rect x="13" y="11" width="1" height="1" fill="#bcbab0"/><rect x="0" y="12" width="6" height="1" fill="#bcbab0"/><rect x="8" y="12" width="6" height="1" fill="#bcbab0"/></svg>
<svg class="a" style="left:1003px;top:54px" width="14" height="13" shape-rendering="crispEdges"><rect x="8" y="0" width="1" height="1" fill="#bcbab0"/><rect x="8" y="1" width="2" height="1" fill="#bcbab0"/><rect x="8" y="2" width="3" height="1" fill="#bcbab0"/><rect x="0" y="3" width="12" height="1" fill="#bcbab0"/><rect x="0" y="4" width="11" height="1" fill="#bcbab0"/><rect x="8" y="5" width="2" height="1" fill="#bcbab0"/><rect x="8" y="6" width="1" height="1" fill="#bcbab0"/><rect x="0" y="7" width="6" height="1" fill="#bcbab0"/><rect x="8" y="7" width="6" height="1" fill="#bcbab0"/><rect x="0" y="8" width="1" height="1" fill="#bcbab0"/><rect x="5" y="8" width="1" height="1" fill="#bcbab0"/><rect x="8" y="8" width="1" height="1" fill="#bcbab0"/><rect x="13" y="8" width="1" height="1" fill="#bcbab0"/><rect x="0" y="9" width="1" height="1" fill="#bcbab0"/><rect x="5" y="9" width="1" height="1" fill="#bcbab0"/><rect x="8" y="9" width="1" height="1" fill="#bcbab0"/><rect x="13" y="9" width="1" height="1" fill="#bcbab0"/><rect x="0" y="10" width="6" height="1" fill="#bcbab0"/><rect x="8" y="10" width="6" height="1" fill="#bcbab0"/><rect x="0" y="11" width="1" height="1" fill="#bcbab0"/><rect x="5" y="11" width="1" height="1" fill="#bcbab0"/><rect x="8" y="11" width="1" height="1" fill="#bcbab0"/><rect x="13" y="11" width="1" height="1" fill="#bcbab0"/><rect x="0" y="12" width="6" height="1" fill="#bcbab0"/><rect x="8" y="12" width="6" height="1" fill="#bcbab0"/></svg>
<svg class="a" style="left:10px;top:77px" width="17" height="14" shape-rendering="crispEdges"><rect x="8" y="0" width="1" height="1" fill="#ff0000"/><rect x="3" y="1" width="2" height="1" fill="#000"/><rect x="7" y="1" width="3" height="1" fill="#ff0000"/><rect x="3" y="2" width="2" height="1" fill="#000"/><rect x="6" y="2" width="2" height="1" fill="#ff0000"/><rect x="8" y="2" width="1" height="1" fill="#90f0d8"/><rect x="9" y="2" width="2" height="1" fill="#ff0000"/><rect x="3" y="3" width="1" height="1" fill="#000"/><rect x="5" y="3" width="2" height="1" fill="#ff0000"/><rect x="7" y="3" width="3" height="1" fill="#90f0d8"/><rect x="10" y="3" width="2" height="1" fill="#ff0000"/><rect x="3" y="4" width="1" height="1" fill="#000"/><rect x="4" y="4" width="2" height="1" fill="#ff0000"/><rect x="6" y="4" width="5" height="1" fill="#90f0d8"/><rect x="11" y="4" width="2" height="1" fill="#ff0000"/><rect x="3" y="5" width="2" height="1" fill="#ff0000"/><rect x="5" y="5" width="7" height="1" fill="#90f0d8"/><rect x="12" y="5" width="2" height="1" fill="#ff0000"/><rect x="2" y="6" width="2" height="1" fill="#ff0000"/><rect x="4" y="6" width="9" height="1" fill="#90f0d8"/><rect x="13" y="6" width="2" height="1" fill="#ff0000"/><rect x="1" y="7" width="2" height="1" fill="#ff0000"/><rect x="3" y="7" width="1" height="1" fill="#000"/><rect x="4" y="7" width="2" height="1" fill="#90f0d8"/><rect x="6" y="7" width="2" height="1" fill="#000"/><rect x="8" y="7" width="3" height="1" fill="#90f0d8"/><rect x="11" y="7" width="1" height="1" fill="#000"/><rect x="12" y="7" width="1" height="1" fill="#90f0d8"/><rect x="13" y="7" width="1" height="1" fill="#000"/><rect x="14" y="7" width="2" height="1" fill="#ff0000"/><rect x="3" y="8" width="1" height="1" fill="#000"/><rect x="4" y="8" width="2" height="1" fill="#90f0d8"/><rect x="6" y="8" width="3" height="1" fill="#000"/><rect x="9" y="8" width="2" height="1" fill="#90f0d8"/><rect x="11" y="8" width="1" height="1" fill="#000"/><rect x="12" y="8" width="1" height="1" fill="#90f0d8"/><rect x="13" y="8" width="1" height="1" fill="#000"/><rect x="3" y="9" width="1" height="1" fill="#000"/><rect x="4" y="9" width="2" height="1" fill="#90f0d8"/><rect x="6" y="9" width="1" height="1" fill="#000"/><rect x="7" y="9" width="1" height="1" fill="#90f0d8"/><rect x="8" y="9" width="2" height="1" fill="#000"/><rect x="10" y="9" width="1" height="1" fill="#90f0d8"/><rect x="11" y="9" width="1" height="1" fill="#000"/><rect x="12" y="9" width="1" height="1" fill="#90f0d8"/><rect x="13" y="9" width="1" height="1" fill="#000"/><rect x="3" y="10" width="1" height="1" fill="#000"/><rect x="4" y="10" width="2" height="1" fill="#90f0d8"/><rect x="6" y="10" width="1" height="1" fill="#000"/><rect x="7" y="10" width="2" height="1" fill="#90f0d8"/><rect x="9" y="10" width="3" height="1" fill="#000"/><rect x="12" y="10" width="1" height="1" fill="#90f0d8"/><rect x="13" y="10" width="1" height="1" fill="#000"/><rect x="3" y="11" width="1" height="1" fill="#000"/><rect x="4" y="11" width="2" height="1" fill="#90f0d8"/><rect x="6" y="11" width="1" height="1" fill="#000"/><rect x="7" y="11" width="3" height="1" fill="#90f0d8"/><rect x="10" y="11" width="2" height="1" fill="#000"/><rect x="12" y="11" width="1" height="1" fill="#90f0d8"/><rect x="13" y="11" width="1" height="1" fill="#000"/><rect x="3" y="12" width="1" height="1" fill="#000"/><rect x="4" y="12" width="9" height="1" fill="#90f0d8"/><rect x="13" y="12" width="1" height="1" fill="#000"/><rect x="3" y="13" width="11" height="1" fill="#000"/></svg>
<div class="a" style="left:36px;top:73px;width:23px;height:22px;border:1px solid;border-color:#aca899 #fff #fff #aca899;background:repeating-conic-gradient(#f4f3ee 0 25%,#e6e3d6 0 50%) 0 0/2px 2px"></div>
<svg class="a" style="left:41px;top:77px" width="16" height="16" viewBox="0 0 16 16"><defs><radialGradient id="clk" cx="40%" cy="35%" r="65%"><stop offset="0" stop-color="#fff4c8"/><stop offset="1" stop-color="#e0b050"/></radialGradient></defs><circle cx="8" cy="8" r="7.3" fill="url(#clk)" stroke="#b89858" stroke-width="1.2"/><rect x="7.3" y="2" width="1.4" height="1.4"/><rect x="7.3" y="12.6" width="1.4" height="1.4"/><rect x="2" y="7.3" width="1.4" height="1.4"/><rect x="12.6" y="7.3" width="1.4" height="1.4"/><path d="M8 4v4.5l3 3" stroke="#000" stroke-width="1.5" fill="none"/></svg>
<svg class="a" style="left:69px;top:77px" width="15" height="15" shape-rendering="crispEdges"><rect x="0" y="0" width="15" height="1" fill="#000"/><rect x="0" y="1" width="1" height="1" fill="#000"/><rect x="1" y="1" width="13" height="1" fill="#b8d4f8"/><rect x="14" y="1" width="1" height="1" fill="#000"/><rect x="0" y="2" width="1" height="1" fill="#000"/><rect x="1" y="2" width="4" height="1" fill="#b8d4f8"/><rect x="5" y="2" width="5" height="1" fill="#000"/><rect x="10" y="2" width="4" height="1" fill="#b8d4f8"/><rect x="14" y="2" width="1" height="1" fill="#000"/><rect x="0" y="3" width="1" height="1" fill="#000"/><rect x="1" y="3" width="3" height="1" fill="#b8d4f8"/><rect x="4" y="3" width="1" height="1" fill="#000"/><rect x="5" y="3" width="5" height="1" fill="#b8d4f8"/><rect x="10" y="3" width="1" height="1" fill="#000"/><rect x="11" y="3" width="3" height="1" fill="#b8d4f8"/><rect x="14" y="3" width="1" height="1" fill="#000"/><rect x="0" y="4" width="1" height="1" fill="#000"/><rect x="1" y="4" width="2" height="1" fill="#b8d4f8"/><rect x="3" y="4" width="1" height="1" fill="#000"/><rect x="4" y="4" width="7" height="1" fill="#b8d4f8"/><rect x="11" y="4" width="1" height="1" fill="#000"/><rect x="12" y="4" width="2" height="1" fill="#b8d4f8"/><rect x="14" y="4" width="1" height="1" fill="#000"/><rect x="0" y="5" width="1" height="1" fill="#000"/><rect x="1" y="5" width="1" height="1" fill="#b8d4f8"/><rect x="2" y="5" width="1" height="1" fill="#000"/><rect x="3" y="5" width="3" height="1" fill="#b8d4f8"/><rect x="6" y="5" width="3" height="1" fill="#000"/><rect x="9" y="5" width="3" height="1" fill="#b8d4f8"/><rect x="12" y="5" width="1" height="1" fill="#000"/><rect x="13" y="5" width="1" height="1" fill="#b8d4f8"/><rect x="14" y="5" width="1" height="1" fill="#000"/><rect x="0" y="6" width="1" height="1" fill="#000"/><rect x="1" y="6" width="4" height="1" fill="#b8d4f8"/><rect x="5" y="6" width="1" height="1" fill="#000"/><rect x="6" y="6" width="3" height="1" fill="#b8d4f8"/><rect x="9" y="6" width="1" height="1" fill="#000"/><rect x="10" y="6" width="4" height="1" fill="#b8d4f8"/><rect x="14" y="6" width="1" height="1" fill="#000"/><rect x="0" y="7" width="1" height="1" fill="#000"/><rect x="1" y="7" width="6" height="1" fill="#b8d4f8"/><rect x="7" y="7" width="1" height="1" fill="#000"/><rect x="8" y="7" width="6" height="1" fill="#b8d4f8"/><rect x="14" y="7" width="1" height="1" fill="#000"/><rect x="0" y="8" width="15" height="1" fill="#000"/><rect x="0" y="9" width="2" height="1" fill="#000"/><rect x="2" y="9" width="1" height="1" fill="#fff"/><rect x="3" y="9" width="2" height="1" fill="#000"/><rect x="5" y="9" width="1" height="1" fill="#fff"/><rect x="6" y="9" width="1" height="1" fill="#000"/><rect x="7" y="9" width="4" height="1" fill="#fff"/><rect x="11" y="9" width="4" height="1" fill="#000"/><rect x="0" y="10" width="2" height="1" fill="#000"/><rect x="2" y="10" width="1" height="1" fill="#fff"/><rect x="3" y="10" width="2" height="1" fill="#000"/><rect x="5" y="10" width="1" height="1" fill="#fff"/><rect x="6" y="10" width="3" height="1" fill="#000"/><rect x="9" y="10" width="1" height="1" fill="#fff"/><rect x="10" y="10" width="5" height="1" fill="#000"/><rect x="0" y="11" width="2" height="1" fill="#000"/><rect x="2" y="11" width="4" height="1" fill="#fff"/><rect x="6" y="11" width="2" height="1" fill="#000"/><rect x="8" y="11" width="1" height="1" fill="#fff"/><rect x="9" y="11" width="6" height="1" fill="#000"/><rect x="0" y="12" width="2" height="1" fill="#000"/><rect x="2" y="12" width="1" height="1" fill="#fff"/><rect x="3" y="12" width="2" height="1" fill="#000"/><rect x="5" y="12" width="1" height="1" fill="#fff"/><rect x="6" y="12" width="1" height="1" fill="#000"/><rect x="7" y="12" width="1" height="1" fill="#fff"/><rect x="8" y="12" width="7" height="1" fill="#000"/><rect x="0" y="13" width="2" height="1" fill="#000"/><rect x="2" y="13" width="1" height="1" fill="#fff"/><rect x="3" y="13" width="2" height="1" fill="#000"/><rect x="5" y="13" width="1" height="1" fill="#fff"/><rect x="6" y="13" width="1" height="1" fill="#000"/><rect x="7" y="13" width="4" height="1" fill="#fff"/><rect x="11" y="13" width="4" height="1" fill="#000"/><rect x="0" y="14" width="15" height="1" fill="#000"/></svg>
<svg class="a" style="left:101px;top:77px" width="15" height="15" shape-rendering="crispEdges"><rect x="0" y="0" width="15" height="1" fill="#000"/><rect x="0" y="1" width="9" height="1" fill="#000"/><rect x="9" y="1" width="1" height="1" fill="#fff"/><rect x="10" y="1" width="1" height="1" fill="#000"/><rect x="11" y="1" width="1" height="1" fill="#fff"/><rect x="12" y="1" width="1" height="1" fill="#000"/><rect x="13" y="1" width="1" height="1" fill="#fff"/><rect x="14" y="1" width="1" height="1" fill="#000"/><rect x="0" y="2" width="15" height="1" fill="#000"/><rect x="0" y="3" width="1" height="1" fill="#000"/><rect x="1" y="3" width="13" height="1" fill="#f8e088"/><rect x="14" y="3" width="1" height="1" fill="#000"/><rect x="0" y="4" width="1" height="1" fill="#000"/><rect x="1" y="4" width="2" height="1" fill="#f8e088"/><rect x="3" y="4" width="3" height="1" fill="#000"/><rect x="6" y="4" width="3" height="1" fill="#f8e088"/><rect x="9" y="4" width="3" height="1" fill="#000"/><rect x="12" y="4" width="2" height="1" fill="#f8e088"/><rect x="14" y="4" width="1" height="1" fill="#000"/><rect x="0" y="5" width="1" height="1" fill="#000"/><rect x="1" y="5" width="2" height="1" fill="#f8e088"/><rect x="3" y="5" width="1" height="1" fill="#000"/><rect x="4" y="5" width="1" height="1" fill="#f8e088"/><rect x="5" y="5" width="1" height="1" fill="#000"/><rect x="6" y="5" width="3" height="1" fill="#f8e088"/><rect x="9" y="5" width="1" height="1" fill="#000"/><rect x="10" y="5" width="1" height="1" fill="#f8e088"/><rect x="11" y="5" width="1" height="1" fill="#000"/><rect x="12" y="5" width="2" height="1" fill="#f8e088"/><rect x="14" y="5" width="1" height="1" fill="#000"/><rect x="0" y="6" width="1" height="1" fill="#000"/><rect x="1" y="6" width="1" height="1" fill="#f8e088"/><rect x="2" y="6" width="2" height="1" fill="#000"/><rect x="4" y="6" width="1" height="1" fill="#f8e088"/><rect x="5" y="6" width="5" height="1" fill="#000"/><rect x="10" y="6" width="1" height="1" fill="#f8e088"/><rect x="11" y="6" width="2" height="1" fill="#000"/><rect x="13" y="6" width="1" height="1" fill="#f8e088"/><rect x="14" y="6" width="1" height="1" fill="#000"/><rect x="0" y="7" width="1" height="1" fill="#000"/><rect x="1" y="7" width="13" height="1" fill="#f8e088"/><rect x="14" y="7" width="1" height="1" fill="#000"/><rect x="0" y="8" width="1" height="1" fill="#000"/><rect x="1" y="8" width="13" height="1" fill="#f8e088"/><rect x="14" y="8" width="1" height="1" fill="#000"/><rect x="0" y="9" width="1" height="1" fill="#000"/><rect x="1" y="9" width="2" height="1" fill="#f8e088"/><rect x="3" y="9" width="3" height="1" fill="#000"/><rect x="6" y="9" width="3" height="1" fill="#f8e088"/><rect x="9" y="9" width="3" height="1" fill="#000"/><rect x="12" y="9" width="2" height="1" fill="#f8e088"/><rect x="14" y="9" width="1" height="1" fill="#000"/><rect x="0" y="10" width="1" height="1" fill="#000"/><rect x="1" y="10" width="2" height="1" fill="#f8e088"/><rect x="3" y="10" width="1" height="1" fill="#000"/><rect x="4" y="10" width="1" height="1" fill="#f8e088"/><rect x="5" y="10" width="1" height="1" fill="#000"/><rect x="6" y="10" width="3" height="1" fill="#f8e088"/><rect x="9" y="10" width="1" height="1" fill="#000"/><rect x="10" y="10" width="1" height="1" fill="#f8e088"/><rect x="11" y="10" width="1" height="1" fill="#000"/><rect x="12" y="10" width="2" height="1" fill="#f8e088"/><rect x="14" y="10" width="1" height="1" fill="#000"/><rect x="0" y="11" width="1" height="1" fill="#000"/><rect x="1" y="11" width="1" height="1" fill="#f8e088"/><rect x="2" y="11" width="2" height="1" fill="#000"/><rect x="4" y="11" width="1" height="1" fill="#f8e088"/><rect x="5" y="11" width="5" height="1" fill="#000"/><rect x="10" y="11" width="1" height="1" fill="#f8e088"/><rect x="11" y="11" width="2" height="1" fill="#000"/><rect x="13" y="11" width="1" height="1" fill="#f8e088"/><rect x="14" y="11" width="1" height="1" fill="#000"/><rect x="0" y="12" width="1" height="1" fill="#000"/><rect x="1" y="12" width="13" height="1" fill="#f8e088"/><rect x="14" y="12" width="1" height="1" fill="#000"/><rect x="0" y="13" width="1" height="1" fill="#000"/><rect x="1" y="13" width="13" height="1" fill="#f8e088"/><rect x="14" y="13" width="1" height="1" fill="#000"/><rect x="0" y="14" width="15" height="1" fill="#000"/></svg>
<svg class="a" style="left:130px;top:77px" width="15" height="15" shape-rendering="crispEdges"><rect x="0" y="0" width="15" height="1" fill="#000"/><rect x="0" y="1" width="9" height="1" fill="#000"/><rect x="9" y="1" width="1" height="1" fill="#fff"/><rect x="10" y="1" width="1" height="1" fill="#000"/><rect x="11" y="1" width="1" height="1" fill="#fff"/><rect x="12" y="1" width="1" height="1" fill="#000"/><rect x="13" y="1" width="1" height="1" fill="#fff"/><rect x="14" y="1" width="1" height="1" fill="#000"/><rect x="0" y="2" width="15" height="1" fill="#000"/><rect x="0" y="3" width="1" height="1" fill="#000"/><rect x="1" y="3" width="13" height="1" fill="#a8f8a0"/><rect x="14" y="3" width="1" height="1" fill="#000"/><rect x="0" y="4" width="1" height="1" fill="#000"/><rect x="1" y="4" width="1" height="1" fill="#a8f8a0"/><rect x="2" y="4" width="3" height="1" fill="#000"/><rect x="5" y="4" width="1" height="1" fill="#a8f8a0"/><rect x="6" y="4" width="1" height="1" fill="#000"/><rect x="7" y="4" width="1" height="1" fill="#a8f8a0"/><rect x="8" y="4" width="3" height="1" fill="#000"/><rect x="11" y="4" width="1" height="1" fill="#a8f8a0"/><rect x="12" y="4" width="1" height="1" fill="#000"/><rect x="13" y="4" width="1" height="1" fill="#a8f8a0"/><rect x="14" y="4" width="1" height="1" fill="#000"/><rect x="0" y="5" width="1" height="1" fill="#000"/><rect x="1" y="5" width="1" height="1" fill="#a8f8a0"/><rect x="2" y="5" width="1" height="1" fill="#000"/><rect x="3" y="5" width="1" height="1" fill="#a8f8a0"/><rect x="4" y="5" width="1" height="1" fill="#000"/><rect x="5" y="5" width="1" height="1" fill="#a8f8a0"/><rect x="6" y="5" width="1" height="1" fill="#000"/><rect x="7" y="5" width="1" height="1" fill="#a8f8a0"/><rect x="8" y="5" width="1" height="1" fill="#000"/><rect x="9" y="5" width="1" height="1" fill="#a8f8a0"/><rect x="10" y="5" width="1" height="1" fill="#000"/><rect x="11" y="5" width="1" height="1" fill="#a8f8a0"/><rect x="12" y="5" width="1" height="1" fill="#000"/><rect x="13" y="5" width="1" height="1" fill="#a8f8a0"/><rect x="14" y="5" width="1" height="1" fill="#000"/><rect x="0" y="6" width="1" height="1" fill="#000"/><rect x="1" y="6" width="1" height="1" fill="#a8f8a0"/><rect x="2" y="6" width="1" height="1" fill="#000"/><rect x="3" y="6" width="1" height="1" fill="#a8f8a0"/><rect x="4" y="6" width="1" height="1" fill="#000"/><rect x="5" y="6" width="1" height="1" fill="#a8f8a0"/><rect x="6" y="6" width="1" height="1" fill="#000"/><rect x="7" y="6" width="1" height="1" fill="#a8f8a0"/><rect x="8" y="6" width="1" height="1" fill="#000"/><rect x="9" y="6" width="1" height="1" fill="#a8f8a0"/><rect x="10" y="6" width="1" height="1" fill="#000"/><rect x="11" y="6" width="1" height="1" fill="#a8f8a0"/><rect x="12" y="6" width="1" height="1" fill="#000"/><rect x="13" y="6" width="1" height="1" fill="#a8f8a0"/><rect x="14" y="6" width="1" height="1" fill="#000"/><rect x="0" y="7" width="1" height="1" fill="#000"/><rect x="1" y="7" width="1" height="1" fill="#a8f8a0"/><rect x="2" y="7" width="3" height="1" fill="#000"/><rect x="5" y="7" width="1" height="1" fill="#a8f8a0"/><rect x="6" y="7" width="1" height="1" fill="#000"/><rect x="7" y="7" width="1" height="1" fill="#a8f8a0"/><rect x="8" y="7" width="3" height="1" fill="#000"/><rect x="11" y="7" width="1" height="1" fill="#a8f8a0"/><rect x="12" y="7" width="1" height="1" fill="#000"/><rect x="13" y="7" width="1" height="1" fill="#a8f8a0"/><rect x="14" y="7" width="1" height="1" fill="#000"/><rect x="0" y="8" width="1" height="1" fill="#000"/><rect x="1" y="8" width="13" height="1" fill="#a8f8a0"/><rect x="14" y="8" width="1" height="1" fill="#000"/><rect x="0" y="9" width="1" height="1" fill="#000"/><rect x="1" y="9" width="1" height="1" fill="#a8f8a0"/><rect x="2" y="9" width="3" height="1" fill="#000"/><rect x="5" y="9" width="1" height="1" fill="#a8f8a0"/><rect x="6" y="9" width="1" height="1" fill="#000"/><rect x="7" y="9" width="1" height="1" fill="#a8f8a0"/><rect x="8" y="9" width="3" height="1" fill="#000"/><rect x="11" y="9" width="1" height="1" fill="#a8f8a0"/><rect x="12" y="9" width="1" height="1" fill="#000"/><rect x="13" y="9" width="1" height="1" fill="#a8f8a0"/><rect x="14" y="9" width="1" height="1" fill="#000"/><rect x="0" y="10" width="1" height="1" fill="#000"/><rect x="1" y="10" width="1" height="1" fill="#a8f8a0"/><rect x="2" y="10" width="1" height="1" fill="#000"/><rect x="3" y="10" width="1" height="1" fill="#a8f8a0"/><rect x="4" y="10" width="1" height="1" fill="#000"/><rect x="5" y="10" width="1" height="1" fill="#a8f8a0"/><rect x="6" y="10" width="1" height="1" fill="#000"/><rect x="7" y="10" width="1" height="1" fill="#a8f8a0"/><rect x="8" y="10" width="1" height="1" fill="#000"/><rect x="9" y="10" width="1" height="1" fill="#a8f8a0"/><rect x="10" y="10" width="1" height="1" fill="#000"/><rect x="11" y="10" width="1" height="1" fill="#a8f8a0"/><rect x="12" y="10" width="1" height="1" fill="#000"/><rect x="13" y="10" width="1" height="1" fill="#a8f8a0"/><rect x="14" y="10" width="1" height="1" fill="#000"/><rect x="0" y="11" width="1" height="1" fill="#000"/><rect x="1" y="11" width="1" height="1" fill="#a8f8a0"/><rect x="2" y="11" width="1" height="1" fill="#000"/><rect x="3" y="11" width="1" height="1" fill="#a8f8a0"/><rect x="4" y="11" width="1" height="1" fill="#000"/><rect x="5" y="11" width="1" height="1" fill="#a8f8a0"/><rect x="6" y="11" width="1" height="1" fill="#000"/><rect x="7" y="11" width="1" height="1" fill="#a8f8a0"/><rect x="8" y="11" width="1" height="1" fill="#000"/><rect x="9" y="11" width="1" height="1" fill="#a8f8a0"/><rect x="10" y="11" width="1" height="1" fill="#000"/><rect x="11" y="11" width="1" height="1" fill="#a8f8a0"/><rect x="12" y="11" width="1" height="1" fill="#000"/><rect x="13" y="11" width="1" height="1" fill="#a8f8a0"/><rect x="14" y="11" width="1" height="1" fill="#000"/><rect x="0" y="12" width="1" height="1" fill="#000"/><rect x="1" y="12" width="1" height="1" fill="#a8f8a0"/><rect x="2" y="12" width="3" height="1" fill="#000"/><rect x="5" y="12" width="1" height="1" fill="#a8f8a0"/><rect x="6" y="12" width="1" height="1" fill="#000"/><rect x="7" y="12" width="1" height="1" fill="#a8f8a0"/><rect x="8" y="12" width="3" height="1" fill="#000"/><rect x="11" y="12" width="1" height="1" fill="#a8f8a0"/><rect x="12" y="12" width="1" height="1" fill="#000"/><rect x="13" y="12" width="1" height="1" fill="#a8f8a0"/><rect x="14" y="12" width="1" height="1" fill="#000"/><rect x="0" y="13" width="1" height="1" fill="#000"/><rect x="1" y="13" width="13" height="1" fill="#a8f8a0"/><rect x="14" y="13" width="1" height="1" fill="#000"/><rect x="0" y="14" width="15" height="1" fill="#000"/></svg>
<svg class="a" style="left:159px;top:77px" width="14" height="14" viewBox="0 0 14 14" shape-rendering="crispEdges"><path d="M1 4l4-3h8v9l-4 3H1z" fill="#80b0e8" stroke="#5a88c0"/><path d="M1 8h12M7 1v12M5 1v3H1" stroke="#f0d040" fill="none"/></svg>
<div class="a" style="left:187px;top:73px;width:23px;height:22px;border:1px solid;border-color:#aca899 #fff #fff #aca899;background:repeating-conic-gradient(#f4f3ee 0 25%,#e6e3d6 0 50%) 0 0/2px 2px"></div>
<svg class="a" style="left:193px;top:77px" width="10" height="15" viewBox="0 0 10 15" shape-rendering="crispEdges"><path d="M1.5 1.5v11l3-3 2 5 2-1-2-4h4z" fill="#a8c0f0" stroke="#000"/></svg>
<svg class="a" style="left:215px;top:77px" width="12" height="15" viewBox="0 0 12 15" shape-rendering="crispEdges"><rect x="0.5" y="0.5" width="11" height="14" fill="#f0a8f0" stroke="#000" stroke-dasharray="1.5 1"/><path d="M2.5 2.5v9l2-2 2 4 1-1-2-3h3z" fill="#808080" stroke="#000" stroke-width=".8"/></svg>
<svg class="a" style="left:237px;top:77px" width="15" height="15" viewBox="0 0 15 15" shape-rendering="crispEdges"><path d="M3 14q-3-5-2-8 1-1 2 0l1 2V3q0-1 1-1t1 1v4V2q0-1 1-1t1 1v5V3q0-1 1-1t1 1v5V5q0-1 1-1t1 1v5q0 4-3 5z" fill="#f0d8a0" stroke="#806030" stroke-width=".8"/></svg>
<svg class="a" style="left:260px;top:76px" width="12" height="15" viewBox="0 0 12 15" shape-rendering="crispEdges"><path d="M0 3h2v-2h2v2h2v-2h2v2h2v-2h2" stroke="#e00" fill="none"/><rect x="0.5" y="5.5" width="11" height="9" fill="#f8b070" stroke="#000"/><path d="M3 14V7M6 14v-4M9 14v-2" stroke="#000" stroke-width="1.5"/></svg>
<svg class="a" style="left:292px;top:77px" width="15" height="15" shape-rendering="crispEdges"><rect x="0" y="0" width="15" height="1" fill="#000"/><rect x="0" y="1" width="1" height="1" fill="#000"/><rect x="1" y="1" width="13" height="1" fill="#b0c8f8"/><rect x="14" y="1" width="1" height="1" fill="#000"/><rect x="0" y="2" width="1" height="1" fill="#000"/><rect x="1" y="2" width="2" height="1" fill="#b0c8f8"/><rect x="3" y="2" width="3" height="1" fill="#000"/><rect x="6" y="2" width="2" height="1" fill="#b0c8f8"/><rect x="8" y="2" width="3" height="1" fill="#000"/><rect x="11" y="2" width="3" height="1" fill="#b0c8f8"/><rect x="14" y="2" width="1" height="1" fill="#000"/><rect x="0" y="3" width="1" height="1" fill="#000"/><rect x="1" y="3" width="2" height="1" fill="#b0c8f8"/><rect x="3" y="3" width="1" height="1" fill="#000"/><rect x="4" y="3" width="1" height="1" fill="#b0c8f8"/><rect x="5" y="3" width="1" height="1" fill="#000"/><rect x="6" y="3" width="2" height="1" fill="#b0c8f8"/><rect x="8" y="3" width="1" height="1" fill="#000"/><rect x="9" y="3" width="1" height="1" fill="#b0c8f8"/><rect x="10" y="3" width="1" height="1" fill="#000"/><rect x="11" y="3" width="3" height="1" fill="#b0c8f8"/><rect x="14" y="3" width="1" height="1" fill="#000"/><rect x="0" y="4" width="1" height="1" fill="#000"/><rect x="1" y="4" width="1" height="1" fill="#b0c8f8"/><rect x="2" y="4" width="2" height="1" fill="#000"/><rect x="4" y="4" width="1" height="1" fill="#b0c8f8"/><rect x="5" y="4" width="4" height="1" fill="#000"/><rect x="9" y="4" width="1" height="1" fill="#b0c8f8"/><rect x="10" y="4" width="3" height="1" fill="#000"/><rect x="13" y="4" width="1" height="1" fill="#b0c8f8"/><rect x="14" y="4" width="1" height="1" fill="#000"/><rect x="0" y="5" width="1" height="1" fill="#000"/><rect x="1" y="5" width="13" height="1" fill="#b0c8f8"/><rect x="14" y="5" width="1" height="1" fill="#000"/><rect x="0" y="6" width="1" height="1" fill="#000"/><rect x="1" y="6" width="2" height="1" fill="#b0c8f8"/><rect x="3" y="6" width="3" height="1" fill="#000"/><rect x="6" y="6" width="2" height="1" fill="#b0c8f8"/><rect x="8" y="6" width="3" height="1" fill="#000"/><rect x="11" y="6" width="3" height="1" fill="#b0c8f8"/><rect x="14" y="6" width="1" height="1" fill="#000"/><rect x="0" y="7" width="1" height="1" fill="#000"/><rect x="1" y="7" width="2" height="1" fill="#b0c8f8"/><rect x="3" y="7" width="1" height="1" fill="#000"/><rect x="4" y="7" width="1" height="1" fill="#b0c8f8"/><rect x="5" y="7" width="1" height="1" fill="#000"/><rect x="6" y="7" width="2" height="1" fill="#b0c8f8"/><rect x="8" y="7" width="1" height="1" fill="#000"/><rect x="9" y="7" width="1" height="1" fill="#b0c8f8"/><rect x="10" y="7" width="1" height="1" fill="#000"/><rect x="11" y="7" width="3" height="1" fill="#b0c8f8"/><rect x="14" y="7" width="1" height="1" fill="#000"/><rect x="0" y="8" width="1" height="1" fill="#000"/><rect x="1" y="8" width="1" height="1" fill="#b0c8f8"/><rect x="2" y="8" width="2" height="1" fill="#000"/><rect x="4" y="8" width="1" height="1" fill="#b0c8f8"/><rect x="5" y="8" width="4" height="1" fill="#000"/><rect x="9" y="8" width="1" height="1" fill="#b0c8f8"/><rect x="10" y="8" width="3" height="1" fill="#000"/><rect x="13" y="8" width="1" height="1" fill="#b0c8f8"/><rect x="14" y="8" width="1" height="1" fill="#000"/><rect x="0" y="9" width="1" height="1" fill="#000"/><rect x="1" y="9" width="13" height="1" fill="#b0c8f8"/><rect x="14" y="9" width="1" height="1" fill="#000"/><rect x="0" y="10" width="1" height="1" fill="#000"/><rect x="1" y="10" width="2" height="1" fill="#b0c8f8"/><rect x="3" y="10" width="3" height="1" fill="#000"/><rect x="6" y="10" width="2" height="1" fill="#b0c8f8"/><rect x="8" y="10" width="3" height="1" fill="#000"/><rect x="11" y="10" width="3" height="1" fill="#b0c8f8"/><rect x="14" y="10" width="1" height="1" fill="#000"/><rect x="0" y="11" width="1" height="1" fill="#000"/><rect x="1" y="11" width="2" height="1" fill="#b0c8f8"/><rect x="3" y="11" width="1" height="1" fill="#000"/><rect x="4" y="11" width="1" height="1" fill="#b0c8f8"/><rect x="5" y="11" width="1" height="1" fill="#000"/><rect x="6" y="11" width="2" height="1" fill="#b0c8f8"/><rect x="8" y="11" width="1" height="1" fill="#000"/><rect x="9" y="11" width="1" height="1" fill="#b0c8f8"/><rect x="10" y="11" width="1" height="1" fill="#000"/><rect x="11" y="11" width="3" height="1" fill="#b0c8f8"/><rect x="14" y="11" width="1" height="1" fill="#000"/><rect x="0" y="12" width="1" height="1" fill="#000"/><rect x="1" y="12" width="1" height="1" fill="#b0c8f8"/><rect x="2" y="12" width="2" height="1" fill="#000"/><rect x="4" y="12" width="1" height="1" fill="#b0c8f8"/><rect x="5" y="12" width="4" height="1" fill="#000"/><rect x="9" y="12" width="1" height="1" fill="#b0c8f8"/><rect x="10" y="12" width="3" height="1" fill="#000"/><rect x="13" y="12" width="1" height="1" fill="#b0c8f8"/><rect x="14" y="12" width="1" height="1" fill="#000"/><rect x="0" y="13" width="1" height="1" fill="#000"/><rect x="1" y="13" width="13" height="1" fill="#b0c8f8"/><rect x="14" y="13" width="1" height="1" fill="#000"/><rect x="0" y="14" width="15" height="1" fill="#000"/></svg>
<div class="dd" style="left:316px;top:84px"></div>
<svg class="a" style="left:333px;top:77px" width="16" height="15" viewBox="0 0 16 15" shape-rendering="crispEdges"><path d="M12 2L5 9M5 9h5M5 9V4" stroke="#0050e0" stroke-width="2" fill="none"/><path d="M1 14v-2h2v2h2v-2h2v2h2v-2h2v2h2v-2h2" stroke="#0080ff" fill="none"/></svg>
<div class="combo" style="left:355px;top:73px;width:92px;height:23px"><i style="font-weight:bold;left:1.5px;letter-spacing:0.3px">94.681ns</i><b></b></div>
<svg class="a" style="left:457px;top:83px" width="10" height="9" viewBox="0 0 10 9" shape-rendering="crispEdges"><path d="M8.5 7.5L2 1M1.5 1.5h4.5M1.5 1.5V6" stroke="#000" stroke-width="3" fill="none"/><path d="M8.5 7.5L2 1M1.5 1.5h4M1.5 1.5v4" stroke="#f00" stroke-width="1.5" fill="none"/></svg>
<svg class="a" style="left:484px;top:87px" width="13" height="5" shape-rendering="crispEdges"><rect x="0" y="0" width="3" height="1" fill="#000"/><rect x="0" y="1" width="1" height="1" fill="#000"/><rect x="2" y="1" width="2" height="1" fill="#000"/><rect x="5" y="1" width="3" height="1" fill="#000"/><rect x="10" y="1" width="3" height="1" fill="#000"/><rect x="0" y="2" width="3" height="1" fill="#000"/><rect x="7" y="2" width="2" height="1" fill="#000"/><rect x="10" y="2" width="2" height="1" fill="#000"/><rect x="0" y="3" width="1" height="1" fill="#000"/><rect x="2" y="3" width="2" height="1" fill="#000"/><rect x="5" y="3" width="4" height="1" fill="#000"/><rect x="10" y="3" width="2" height="1" fill="#000"/><rect x="0" y="4" width="3" height="1" fill="#000"/><rect x="5" y="4" width="4" height="1" fill="#000"/><rect x="10" y="4" width="2" height="1" fill="#000"/></svg>
<svg class="a" style="left:491px;top:82px" width="6" height="4" shape-rendering="crispEdges"><rect x="2" y="0" width="2" height="1" fill="#20c8f8"/><rect x="1" y="1" width="4" height="1" fill="#20c8f8"/><rect x="0" y="2" width="6" height="1" fill="#20c8f8"/><rect x="0" y="3" width="6" height="1" fill="#20c8f8"/></svg>
<svg class="a" style="left:507px;top:77px" width="7" height="9" shape-rendering="crispEdges"><rect x="2" y="0" width="2" height="1" fill="#000"/><rect x="1" y="1" width="4" height="1" fill="#000"/><rect x="0" y="2" width="2" height="1" fill="#000"/><rect x="4" y="2" width="2" height="1" fill="#000"/><rect x="0" y="3" width="2" height="1" fill="#000"/><rect x="4" y="3" width="2" height="1" fill="#000"/><rect x="0" y="4" width="6" height="1" fill="#000"/><rect x="0" y="5" width="2" height="1" fill="#000"/><rect x="4" y="5" width="2" height="1" fill="#000"/><rect x="0" y="6" width="2" height="1" fill="#000"/><rect x="4" y="6" width="2" height="1" fill="#000"/><rect x="0" y="7" width="2" height="1" fill="#000"/><rect x="4" y="7" width="2" height="1" fill="#000"/><rect x="0" y="8" width="2" height="1" fill="#000"/><rect x="4" y="8" width="2" height="1" fill="#000"/></svg>
<svg class="a" style="left:515px;top:77px" width="7" height="9" shape-rendering="crispEdges"><rect x="4" y="0" width="1" height="1" fill="#f01010"/><rect x="4" y="1" width="2" height="1" fill="#f01010"/><rect x="5" y="2" width="2" height="1" fill="#f01010"/><rect x="0" y="3" width="1" height="1" fill="#f01010"/><rect x="5" y="3" width="2" height="1" fill="#f01010"/><rect x="0" y="4" width="2" height="1" fill="#f01010"/><rect x="4" y="4" width="2" height="1" fill="#f01010"/><rect x="0" y="5" width="5" height="1" fill="#f01010"/><rect x="0" y="6" width="4" height="1" fill="#f01010"/><rect x="0" y="7" width="5" height="1" fill="#f01010"/><rect x="0" y="8" width="6" height="1" fill="#f01010"/></svg>
<svg class="a" style="left:507px;top:87px" width="13" height="5" shape-rendering="crispEdges"><rect x="0" y="0" width="3" height="1" fill="#000"/><rect x="0" y="1" width="1" height="1" fill="#000"/><rect x="2" y="1" width="2" height="1" fill="#000"/><rect x="5" y="1" width="3" height="1" fill="#000"/><rect x="10" y="1" width="3" height="1" fill="#000"/><rect x="0" y="2" width="3" height="1" fill="#000"/><rect x="7" y="2" width="2" height="1" fill="#000"/><rect x="10" y="2" width="2" height="1" fill="#000"/><rect x="0" y="3" width="1" height="1" fill="#000"/><rect x="2" y="3" width="2" height="1" fill="#000"/><rect x="5" y="3" width="4" height="1" fill="#000"/><rect x="10" y="3" width="2" height="1" fill="#000"/><rect x="0" y="4" width="3" height="1" fill="#000"/><rect x="5" y="4" width="4" height="1" fill="#000"/><rect x="10" y="4" width="2" height="1" fill="#000"/></svg>
<svg class="a" style="left:530px;top:77px" width="7" height="9" shape-rendering="crispEdges"><rect x="0" y="0" width="6" height="1" fill="#000"/><rect x="0" y="1" width="2" height="1" fill="#000"/><rect x="5" y="1" width="2" height="1" fill="#000"/><rect x="0" y="2" width="2" height="1" fill="#000"/><rect x="5" y="2" width="2" height="1" fill="#000"/><rect x="0" y="3" width="2" height="1" fill="#000"/><rect x="5" y="3" width="2" height="1" fill="#000"/><rect x="0" y="4" width="6" height="1" fill="#000"/><rect x="0" y="5" width="2" height="1" fill="#000"/><rect x="5" y="5" width="2" height="1" fill="#000"/><rect x="0" y="6" width="2" height="1" fill="#000"/><rect x="5" y="6" width="2" height="1" fill="#000"/><rect x="0" y="7" width="2" height="1" fill="#000"/><rect x="5" y="7" width="2" height="1" fill="#000"/><rect x="0" y="8" width="6" height="1" fill="#000"/></svg>
<svg class="a" style="left:538px;top:77px" width="7" height="9" shape-rendering="crispEdges"><rect x="4" y="0" width="1" height="1" fill="#ffb000"/><rect x="4" y="1" width="2" height="1" fill="#ffb000"/><rect x="5" y="2" width="2" height="1" fill="#ffb000"/><rect x="0" y="3" width="1" height="1" fill="#ffb000"/><rect x="5" y="3" width="2" height="1" fill="#ffb000"/><rect x="0" y="4" width="2" height="1" fill="#ffb000"/><rect x="4" y="4" width="2" height="1" fill="#ffb000"/><rect x="0" y="5" width="5" height="1" fill="#ffb000"/><rect x="0" y="6" width="4" height="1" fill="#ffb000"/><rect x="0" y="7" width="5" height="1" fill="#ffb000"/><rect x="0" y="8" width="6" height="1" fill="#ffb000"/></svg>
<svg class="a" style="left:530px;top:87px" width="13" height="5" shape-rendering="crispEdges"><rect x="0" y="0" width="3" height="1" fill="#000"/><rect x="0" y="1" width="1" height="1" fill="#000"/><rect x="2" y="1" width="2" height="1" fill="#000"/><rect x="5" y="1" width="3" height="1" fill="#000"/><rect x="10" y="1" width="3" height="1" fill="#000"/><rect x="0" y="2" width="3" height="1" fill="#000"/><rect x="7" y="2" width="2" height="1" fill="#000"/><rect x="10" y="2" width="2" height="1" fill="#000"/><rect x="0" y="3" width="1" height="1" fill="#000"/><rect x="2" y="3" width="2" height="1" fill="#000"/><rect x="5" y="3" width="4" height="1" fill="#000"/><rect x="10" y="3" width="2" height="1" fill="#000"/><rect x="0" y="4" width="3" height="1" fill="#000"/><rect x="5" y="4" width="4" height="1" fill="#000"/><rect x="10" y="4" width="2" height="1" fill="#000"/></svg>
<svg class="a" style="left:553px;top:77px" width="7" height="9" shape-rendering="crispEdges"><rect x="0" y="0" width="7" height="1" fill="#a09e98"/><rect x="0" y="1" width="7" height="1" fill="#a09e98"/><rect x="2" y="2" width="3" height="1" fill="#a09e98"/><rect x="2" y="3" width="3" height="1" fill="#a09e98"/><rect x="2" y="4" width="3" height="1" fill="#a09e98"/><rect x="2" y="5" width="3" height="1" fill="#a09e98"/><rect x="2" y="6" width="3" height="1" fill="#a09e98"/><rect x="2" y="7" width="3" height="1" fill="#a09e98"/><rect x="2" y="8" width="3" height="1" fill="#a09e98"/></svg>
<svg class="a" style="left:561px;top:77px" width="7" height="9" shape-rendering="crispEdges"><rect x="4" y="0" width="1" height="1" fill="#c4c2bc"/><rect x="4" y="1" width="2" height="1" fill="#c4c2bc"/><rect x="5" y="2" width="2" height="1" fill="#c4c2bc"/><rect x="0" y="3" width="1" height="1" fill="#c4c2bc"/><rect x="5" y="3" width="2" height="1" fill="#c4c2bc"/><rect x="0" y="4" width="2" height="1" fill="#c4c2bc"/><rect x="4" y="4" width="2" height="1" fill="#c4c2bc"/><rect x="0" y="5" width="5" height="1" fill="#c4c2bc"/><rect x="0" y="6" width="4" height="1" fill="#c4c2bc"/><rect x="0" y="7" width="5" height="1" fill="#c4c2bc"/><rect x="0" y="8" width="6" height="1" fill="#c4c2bc"/></svg>
<svg class="a" style="left:553px;top:87px" width="13" height="5" shape-rendering="crispEdges"><rect x="0" y="0" width="3" height="1" fill="#a09e98"/><rect x="0" y="1" width="1" height="1" fill="#a09e98"/><rect x="2" y="1" width="2" height="1" fill="#a09e98"/><rect x="5" y="1" width="3" height="1" fill="#a09e98"/><rect x="10" y="1" width="3" height="1" fill="#a09e98"/><rect x="0" y="2" width="3" height="1" fill="#a09e98"/><rect x="7" y="2" width="2" height="1" fill="#a09e98"/><rect x="10" y="2" width="2" height="1" fill="#a09e98"/><rect x="0" y="3" width="1" height="1" fill="#a09e98"/><rect x="2" y="3" width="2" height="1" fill="#a09e98"/><rect x="5" y="3" width="4" height="1" fill="#a09e98"/><rect x="10" y="3" width="2" height="1" fill="#a09e98"/><rect x="0" y="4" width="3" height="1" fill="#a09e98"/><rect x="5" y="4" width="4" height="1" fill="#a09e98"/><rect x="10" y="4" width="2" height="1" fill="#a09e98"/></svg>
<svg class="a" style="left:576px;top:77px" width="7" height="9" shape-rendering="crispEdges"><rect x="2" y="1" width="2" height="1" fill="#ff0000"/><rect x="2" y="2" width="2" height="1" fill="#ff0000"/><rect x="0" y="3" width="6" height="1" fill="#ff0000"/><rect x="0" y="4" width="6" height="1" fill="#ff0000"/><rect x="2" y="5" width="2" height="1" fill="#ff0000"/><rect x="2" y="6" width="2" height="1" fill="#ff0000"/></svg>
<svg class="a" style="left:584px;top:77px" width="7" height="9" shape-rendering="crispEdges"><rect x="4" y="0" width="1" height="1" fill="#ffb000"/><rect x="4" y="1" width="2" height="1" fill="#ffb000"/><rect x="5" y="2" width="2" height="1" fill="#ffb000"/><rect x="0" y="3" width="1" height="1" fill="#ffb000"/><rect x="5" y="3" width="2" height="1" fill="#ffb000"/><rect x="0" y="4" width="2" height="1" fill="#ffb000"/><rect x="4" y="4" width="2" height="1" fill="#ffb000"/><rect x="0" y="5" width="5" height="1" fill="#ffb000"/><rect x="0" y="6" width="4" height="1" fill="#ffb000"/><rect x="0" y="7" width="5" height="1" fill="#ffb000"/><rect x="0" y="8" width="6" height="1" fill="#ffb000"/></svg>
<svg class="a" style="left:576px;top:87px" width="13" height="5" shape-rendering="crispEdges"><rect x="0" y="0" width="3" height="1" fill="#000"/><rect x="0" y="1" width="1" height="1" fill="#000"/><rect x="2" y="1" width="2" height="1" fill="#000"/><rect x="5" y="1" width="3" height="1" fill="#000"/><rect x="10" y="1" width="3" height="1" fill="#000"/><rect x="0" y="2" width="3" height="1" fill="#000"/><rect x="7" y="2" width="2" height="1" fill="#000"/><rect x="10" y="2" width="2" height="1" fill="#000"/><rect x="0" y="3" width="1" height="1" fill="#000"/><rect x="2" y="3" width="2" height="1" fill="#000"/><rect x="5" y="3" width="4" height="1" fill="#000"/><rect x="10" y="3" width="2" height="1" fill="#000"/><rect x="0" y="4" width="3" height="1" fill="#000"/><rect x="5" y="4" width="4" height="1" fill="#000"/><rect x="10" y="4" width="2" height="1" fill="#000"/></svg>
<svg class="a" style="left:605px;top:77px" width="15" height="14" shape-rendering="crispEdges"><rect x="1" y="0" width="5" height="1" fill="#000"/><rect x="9" y="0" width="5" height="1" fill="#000"/><rect x="1" y="1" width="1" height="1" fill="#000"/><rect x="2" y="1" width="1" height="1" fill="#fff"/><rect x="3" y="1" width="1" height="1" fill="#000"/><rect x="4" y="1" width="1" height="1" fill="#fff"/><rect x="5" y="1" width="1" height="1" fill="#000"/><rect x="9" y="1" width="1" height="1" fill="#000"/><rect x="10" y="1" width="1" height="1" fill="#fff"/><rect x="11" y="1" width="1" height="1" fill="#000"/><rect x="12" y="1" width="1" height="1" fill="#fff"/><rect x="13" y="1" width="1" height="1" fill="#000"/><rect x="1" y="2" width="5" height="1" fill="#000"/><rect x="9" y="2" width="5" height="1" fill="#000"/><rect x="1" y="3" width="6" height="1" fill="#000"/><rect x="8" y="3" width="6" height="1" fill="#000"/><rect x="0" y="4" width="6" height="1" fill="#000"/><rect x="6" y="4" width="1" height="1" fill="#fff"/><rect x="7" y="4" width="1" height="1" fill="#000"/><rect x="8" y="4" width="1" height="1" fill="#fff"/><rect x="9" y="4" width="6" height="1" fill="#000"/><rect x="0" y="5" width="15" height="1" fill="#000"/><rect x="0" y="6" width="2" height="1" fill="#000"/><rect x="2" y="6" width="1" height="1" fill="#fff"/><rect x="3" y="6" width="8" height="1" fill="#000"/><rect x="11" y="6" width="1" height="1" fill="#fff"/><rect x="12" y="6" width="3" height="1" fill="#000"/><rect x="0" y="7" width="2" height="1" fill="#000"/><rect x="2" y="7" width="1" height="1" fill="#fff"/><rect x="3" y="7" width="4" height="1" fill="#000"/><rect x="8" y="7" width="3" height="1" fill="#000"/><rect x="11" y="7" width="1" height="1" fill="#fff"/><rect x="12" y="7" width="3" height="1" fill="#000"/><rect x="0" y="8" width="7" height="1" fill="#000"/><rect x="8" y="8" width="7" height="1" fill="#000"/><rect x="0" y="9" width="6" height="1" fill="#000"/><rect x="9" y="9" width="6" height="1" fill="#000"/><rect x="0" y="10" width="2" height="1" fill="#000"/><rect x="2" y="10" width="1" height="1" fill="#fff"/><rect x="3" y="10" width="3" height="1" fill="#000"/><rect x="9" y="10" width="2" height="1" fill="#000"/><rect x="11" y="10" width="1" height="1" fill="#fff"/><rect x="12" y="10" width="3" height="1" fill="#000"/><rect x="0" y="11" width="6" height="1" fill="#000"/><rect x="9" y="11" width="6" height="1" fill="#000"/><rect x="0" y="12" width="6" height="1" fill="#000"/><rect x="9" y="12" width="6" height="1" fill="#000"/><rect x="0" y="13" width="6" height="1" fill="#000"/><rect x="9" y="13" width="6" height="1" fill="#000"/></svg>
<svg class="a" style="left:628px;top:79px" width="13" height="10" shape-rendering="crispEdges"><rect x="0" y="0" width="2" height="1" fill="#000"/><rect x="7" y="0" width="1" height="1" fill="#000"/><rect x="1" y="1" width="1" height="1" fill="#000"/><rect x="6" y="1" width="2" height="1" fill="#000"/><rect x="1" y="2" width="1" height="1" fill="#000"/><rect x="5" y="2" width="1" height="1" fill="#000"/><rect x="6" y="2" width="1" height="1" fill="#0030ff"/><rect x="7" y="2" width="1" height="1" fill="#000"/><rect x="1" y="3" width="1" height="1" fill="#000"/><rect x="4" y="3" width="1" height="1" fill="#000"/><rect x="5" y="3" width="2" height="1" fill="#0030ff"/><rect x="7" y="3" width="5" height="1" fill="#000"/><rect x="1" y="4" width="1" height="1" fill="#000"/><rect x="3" y="4" width="1" height="1" fill="#000"/><rect x="4" y="4" width="7" height="1" fill="#0030ff"/><rect x="11" y="4" width="1" height="1" fill="#000"/><rect x="1" y="5" width="1" height="1" fill="#000"/><rect x="4" y="5" width="1" height="1" fill="#000"/><rect x="5" y="5" width="2" height="1" fill="#0030ff"/><rect x="7" y="5" width="5" height="1" fill="#000"/><rect x="1" y="6" width="1" height="1" fill="#000"/><rect x="5" y="6" width="1" height="1" fill="#000"/><rect x="6" y="6" width="1" height="1" fill="#0030ff"/><rect x="7" y="6" width="1" height="1" fill="#000"/><rect x="1" y="7" width="1" height="1" fill="#000"/><rect x="6" y="7" width="2" height="1" fill="#000"/><rect x="1" y="8" width="1" height="1" fill="#000"/><rect x="7" y="8" width="1" height="1" fill="#000"/><rect x="1" y="9" width="2" height="1" fill="#000"/></svg>
<svg class="a" style="left:651px;top:79px" width="13" height="10" shape-rendering="crispEdges"><rect x="5" y="0" width="1" height="1" fill="#000"/><rect x="11" y="0" width="2" height="1" fill="#000"/><rect x="5" y="1" width="2" height="1" fill="#000"/><rect x="11" y="1" width="1" height="1" fill="#000"/><rect x="5" y="2" width="1" height="1" fill="#000"/><rect x="6" y="2" width="1" height="1" fill="#00e000"/><rect x="7" y="2" width="1" height="1" fill="#000"/><rect x="11" y="2" width="1" height="1" fill="#000"/><rect x="1" y="3" width="5" height="1" fill="#000"/><rect x="6" y="3" width="2" height="1" fill="#00e000"/><rect x="8" y="3" width="1" height="1" fill="#000"/><rect x="11" y="3" width="1" height="1" fill="#000"/><rect x="1" y="4" width="1" height="1" fill="#000"/><rect x="2" y="4" width="7" height="1" fill="#00e000"/><rect x="9" y="4" width="1" height="1" fill="#000"/><rect x="11" y="4" width="1" height="1" fill="#000"/><rect x="1" y="5" width="5" height="1" fill="#000"/><rect x="6" y="5" width="2" height="1" fill="#00e000"/><rect x="8" y="5" width="1" height="1" fill="#000"/><rect x="11" y="5" width="1" height="1" fill="#000"/><rect x="5" y="6" width="1" height="1" fill="#000"/><rect x="6" y="6" width="1" height="1" fill="#00e000"/><rect x="7" y="6" width="1" height="1" fill="#000"/><rect x="11" y="6" width="1" height="1" fill="#000"/><rect x="5" y="7" width="2" height="1" fill="#000"/><rect x="11" y="7" width="1" height="1" fill="#000"/><rect x="5" y="8" width="1" height="1" fill="#000"/><rect x="11" y="8" width="1" height="1" fill="#000"/><rect x="10" y="9" width="2" height="1" fill="#000"/></svg>
<div class="a" style="left:680px;top:73px;width:23px;height:22px;border:1px solid;border-color:#aca899 #fff #fff #aca899;background:repeating-conic-gradient(#f4f3ee 0 25%,#e6e3d6 0 50%) 0 0/2px 2px"></div>
<svg class="a" style="left:684px;top:78px" width="16" height="15" shape-rendering="crispEdges"><rect x="0" y="0" width="16" height="1" fill="#000"/><rect x="0" y="1" width="10" height="1" fill="#000"/><rect x="10" y="1" width="1" height="1" fill="#fff"/><rect x="11" y="1" width="1" height="1" fill="#000"/><rect x="12" y="1" width="1" height="1" fill="#fff"/><rect x="13" y="1" width="1" height="1" fill="#000"/><rect x="14" y="1" width="1" height="1" fill="#fff"/><rect x="15" y="1" width="1" height="1" fill="#000"/><rect x="0" y="2" width="16" height="1" fill="#000"/><rect x="0" y="3" width="1" height="1" fill="#000"/><rect x="1" y="3" width="14" height="1" fill="#ffd0d0"/><rect x="15" y="3" width="1" height="1" fill="#000"/><rect x="0" y="4" width="1" height="1" fill="#000"/><rect x="1" y="4" width="1" height="1" fill="#ffd0d0"/><rect x="2" y="4" width="3" height="1" fill="#ff0000"/><rect x="5" y="4" width="1" height="1" fill="#ffd0d0"/><rect x="6" y="4" width="3" height="1" fill="#ff0000"/><rect x="9" y="4" width="1" height="1" fill="#ffd0d0"/><rect x="10" y="4" width="3" height="1" fill="#ff0000"/><rect x="13" y="4" width="2" height="1" fill="#ffd0d0"/><rect x="15" y="4" width="1" height="1" fill="#000"/><rect x="0" y="5" width="1" height="1" fill="#000"/><rect x="1" y="5" width="1" height="1" fill="#ffd0d0"/><rect x="2" y="5" width="1" height="1" fill="#ff0000"/><rect x="3" y="5" width="1" height="1" fill="#ffd0d0"/><rect x="4" y="5" width="1" height="1" fill="#ff0000"/><rect x="5" y="5" width="1" height="1" fill="#ffd0d0"/><rect x="6" y="5" width="1" height="1" fill="#ff0000"/><rect x="7" y="5" width="1" height="1" fill="#ffd0d0"/><rect x="8" y="5" width="1" height="1" fill="#ff0000"/><rect x="9" y="5" width="1" height="1" fill="#ffd0d0"/><rect x="10" y="5" width="1" height="1" fill="#ff0000"/><rect x="11" y="5" width="1" height="1" fill="#ffd0d0"/><rect x="12" y="5" width="1" height="1" fill="#ff0000"/><rect x="13" y="5" width="2" height="1" fill="#ffd0d0"/><rect x="15" y="5" width="1" height="1" fill="#000"/><rect x="0" y="6" width="1" height="1" fill="#000"/><rect x="1" y="6" width="2" height="1" fill="#ff0000"/><rect x="3" y="6" width="1" height="1" fill="#ffd0d0"/><rect x="4" y="6" width="3" height="1" fill="#ff0000"/><rect x="7" y="6" width="1" height="1" fill="#ffd0d0"/><rect x="8" y="6" width="3" height="1" fill="#ff0000"/><rect x="11" y="6" width="1" height="1" fill="#ffd0d0"/><rect x="12" y="6" width="2" height="1" fill="#ff0000"/><rect x="14" y="6" width="1" height="1" fill="#f08888"/><rect x="15" y="6" width="1" height="1" fill="#000"/><rect x="0" y="7" width="1" height="1" fill="#000"/><rect x="1" y="7" width="4" height="1" fill="#ffd0d0"/><rect x="5" y="7" width="5" height="1" fill="#000"/><rect x="10" y="7" width="4" height="1" fill="#ffd0d0"/><rect x="14" y="7" width="1" height="1" fill="#f08888"/><rect x="15" y="7" width="1" height="1" fill="#000"/><rect x="0" y="8" width="1" height="1" fill="#000"/><rect x="1" y="8" width="3" height="1" fill="#ffd0d0"/><rect x="4" y="8" width="1" height="1" fill="#000"/><rect x="5" y="8" width="4" height="1" fill="#ffd0d0"/><rect x="9" y="8" width="1" height="1" fill="#000"/><rect x="10" y="8" width="3" height="1" fill="#ffd0d0"/><rect x="13" y="8" width="2" height="1" fill="#f08888"/><rect x="15" y="8" width="1" height="1" fill="#000"/><rect x="0" y="9" width="1" height="1" fill="#000"/><rect x="1" y="9" width="2" height="1" fill="#ffd0d0"/><rect x="3" y="9" width="1" height="1" fill="#000"/><rect x="4" y="9" width="3" height="1" fill="#ffd0d0"/><rect x="7" y="9" width="1" height="1" fill="#000"/><rect x="8" y="9" width="2" height="1" fill="#ffd0d0"/><rect x="10" y="9" width="1" height="1" fill="#000"/><rect x="11" y="9" width="2" height="1" fill="#ffd0d0"/><rect x="13" y="9" width="2" height="1" fill="#f08888"/><rect x="15" y="9" width="1" height="1" fill="#000"/><rect x="0" y="10" width="1" height="1" fill="#000"/><rect x="1" y="10" width="2" height="1" fill="#ffd0d0"/><rect x="3" y="10" width="1" height="1" fill="#000"/><rect x="4" y="10" width="3" height="1" fill="#ffd0d0"/><rect x="7" y="10" width="2" height="1" fill="#000"/><rect x="9" y="10" width="1" height="1" fill="#ffd0d0"/><rect x="10" y="10" width="1" height="1" fill="#000"/><rect x="11" y="10" width="1" height="1" fill="#ffd0d0"/><rect x="12" y="10" width="3" height="1" fill="#f08888"/><rect x="15" y="10" width="1" height="1" fill="#000"/><rect x="0" y="11" width="1" height="1" fill="#000"/><rect x="1" y="11" width="2" height="1" fill="#ffd0d0"/><rect x="3" y="11" width="1" height="1" fill="#000"/><rect x="4" y="11" width="6" height="1" fill="#ffd0d0"/><rect x="10" y="11" width="1" height="1" fill="#000"/><rect x="11" y="11" width="4" height="1" fill="#f08888"/><rect x="15" y="11" width="1" height="1" fill="#000"/><rect x="0" y="12" width="1" height="1" fill="#000"/><rect x="1" y="12" width="3" height="1" fill="#ffd0d0"/><rect x="4" y="12" width="1" height="1" fill="#000"/><rect x="5" y="12" width="4" height="1" fill="#ffd0d0"/><rect x="9" y="12" width="1" height="1" fill="#000"/><rect x="10" y="12" width="5" height="1" fill="#f08888"/><rect x="15" y="12" width="1" height="1" fill="#000"/><rect x="0" y="13" width="1" height="1" fill="#000"/><rect x="1" y="13" width="4" height="1" fill="#ffd0d0"/><rect x="5" y="13" width="4" height="1" fill="#000"/><rect x="9" y="13" width="6" height="1" fill="#f08888"/><rect x="15" y="13" width="1" height="1" fill="#000"/><rect x="0" y="14" width="16" height="1" fill="#000"/></svg>
<svg class="a" style="left:706px;top:78px" width="15" height="13" shape-rendering="crispEdges"><rect x="0" y="0" width="3" height="1" fill="#ff0000"/><rect x="5" y="0" width="2" height="1" fill="#ff0000"/><rect x="8" y="0" width="1" height="1" fill="#ff0000"/><rect x="11" y="0" width="3" height="1" fill="#ff0000"/><rect x="0" y="1" width="2" height="1" fill="#ff0000"/><rect x="3" y="1" width="1" height="1" fill="#ff0000"/><rect x="5" y="1" width="2" height="1" fill="#ff0000"/><rect x="8" y="1" width="1" height="1" fill="#ff0000"/><rect x="10" y="1" width="2" height="1" fill="#ff0000"/><rect x="0" y="2" width="2" height="1" fill="#ff0000"/><rect x="3" y="2" width="1" height="1" fill="#ff0000"/><rect x="5" y="2" width="2" height="1" fill="#ff0000"/><rect x="8" y="2" width="1" height="1" fill="#ff0000"/><rect x="10" y="2" width="2" height="1" fill="#ff0000"/><rect x="0" y="3" width="3" height="1" fill="#ff0000"/><rect x="5" y="3" width="2" height="1" fill="#ff0000"/><rect x="8" y="3" width="1" height="1" fill="#ff0000"/><rect x="11" y="3" width="2" height="1" fill="#ff0000"/><rect x="0" y="4" width="2" height="1" fill="#ff0000"/><rect x="3" y="4" width="1" height="1" fill="#ff0000"/><rect x="5" y="4" width="2" height="1" fill="#ff0000"/><rect x="8" y="4" width="1" height="1" fill="#ff0000"/><rect x="12" y="4" width="2" height="1" fill="#ff0000"/><rect x="0" y="5" width="2" height="1" fill="#ff0000"/><rect x="3" y="5" width="1" height="1" fill="#ff0000"/><rect x="5" y="5" width="2" height="1" fill="#ff0000"/><rect x="8" y="5" width="1" height="1" fill="#ff0000"/><rect x="12" y="5" width="2" height="1" fill="#ff0000"/><rect x="0" y="6" width="3" height="1" fill="#ff0000"/><rect x="6" y="6" width="2" height="1" fill="#ff0000"/><rect x="10" y="6" width="3" height="1" fill="#ff0000"/><rect x="0" y="8" width="2" height="1" fill="#000"/><rect x="2" y="8" width="11" height="1" fill="#20e020"/><rect x="13" y="8" width="2" height="1" fill="#000"/><rect x="0" y="9" width="2" height="1" fill="#000"/><rect x="2" y="9" width="11" height="1" fill="#fff"/><rect x="13" y="9" width="2" height="1" fill="#000"/><rect x="0" y="10" width="2" height="1" fill="#000"/><rect x="2" y="10" width="11" height="1" fill="#ffb000"/><rect x="13" y="10" width="2" height="1" fill="#000"/><rect x="0" y="11" width="2" height="1" fill="#000"/><rect x="2" y="11" width="11" height="1" fill="#fff"/><rect x="13" y="11" width="2" height="1" fill="#000"/><rect x="0" y="12" width="2" height="1" fill="#000"/><rect x="2" y="12" width="11" height="1" fill="#ff0000"/><rect x="13" y="12" width="2" height="1" fill="#000"/></svg>
<svg class="a" style="left:729px;top:76px" width="14" height="17" viewBox="0 0 14 17" shape-rendering="crispEdges"><path d="M4.5 0v3h3v2M8.5 8v2h3v2M4.5 11v3h3v3" stroke="#d0d0c8" fill="none"/><path d="M1 10V7.5l2.5-2.5 2.5 2.5V10zM8 9v2.5l2.5 2.5 2.5-2.5V9z" fill="#b8b8b0"/></svg>
<div class="a" style="left:757px;top:77px;font-size:13px;line-height:14px;letter-spacing:0.9px">波形高度</div>
<div class="combo" style="left:815px;top:73px;width:58px;height:23px"><i style="font-weight:bold;left:4px;letter-spacing:0px">50</i><b></b></div>
<div class="a" style="left:884px;top:77px;font-size:13px;line-height:14px;letter-spacing:0.3px">觸發延遲</div>
<div class="a" style="left:955px;top:74px;width:68px;height:21px;border:1px solid #000;background:#ece9d8;color:#a8a8a0;font-weight:bold;font-size:14px;text-align:center;line-height:19px">5ns</div>
<div class="a" style="left:0;top:96px;width:1024px;height:38px;border:1px solid #aca899"></div>
<div class="info" style="left:15px;top:97px;line-height:14px"><span class="cjk">每格</span>:94.681ns</div>
<div class="info" style="left:15px;top:114px;line-height:14px"><span class="cjk">總數</span>:163.84us</div>
<div class="info" style="left:220px;top:97px;line-height:14px"><span class="cjk">中心點</span>:149.546us</div>
<div class="info" style="left:220px;top:114px;line-height:14px"><span class="cjk">觸發點</span>:0ns</div>
<div class="info" style="left:422px;top:97px;line-height:14px">Ds Pos:147.465us</div>
<div class="info" style="left:422px;top:114px;line-height:14px">De Pos:311.305us</div>
<div class="info" style="left:627px;top:97px;line-height:14px">A - T = 2.989ms</div>
<div class="info" style="left:627px;top:114px;line-height:14px">B - T = 2.992ms</div>
<div class="info" style="left:831px;top:97px;line-height:14px">A - B = 2.506us</div>
<div class="info" style="left:831px;top:114px;line-height:14px"><span class="cjk">壓縮率</span>:<span class="cjk">否</span></div>
<div class="dd" style="left:528px;top:103px;border-left-width:3.5px;border-right-width:3.5px"></div>
<div class="dd" style="left:528px;top:120px;border-left-width:3.5px;border-right-width:3.5px"></div>
<div class="dd" style="left:726px;top:103px;border-left-width:3.5px;border-right-width:3.5px"></div>
<div class="dd" style="left:726px;top:120px;border-left-width:3.5px;border-right-width:3.5px"></div>
<div class="dd" style="left:930px;top:103px;border-left-width:3.5px;border-right-width:3.5px"></div>
<div class="a" style="left:524px;top:98px;width:1px;height:14px;background:#aca899"></div><div class="a" style="left:525px;top:98px;width:1px;height:14px;background:#fff"></div>
<div class="a" style="left:524px;top:115px;width:1px;height:14px;background:#aca899"></div><div class="a" style="left:525px;top:115px;width:1px;height:14px;background:#fff"></div>
<div class="a" style="left:722px;top:98px;width:1px;height:14px;background:#aca899"></div><div class="a" style="left:723px;top:98px;width:1px;height:14px;background:#fff"></div>
<div class="a" style="left:722px;top:115px;width:1px;height:14px;background:#aca899"></div><div class="a" style="left:723px;top:115px;width:1px;height:14px;background:#fff"></div>
<div class="a" style="left:926px;top:98px;width:1px;height:14px;background:#aca899"></div><div class="a" style="left:927px;top:98px;width:1px;height:14px;background:#fff"></div>
<div class="a" style="left:0;top:137px;width:120px;height:613px;background:#b9b9b9;border:1px solid #aca899"></div>
<div class="a" style="left:1px;top:165px;width:118px;height:1px;background:#aca899"></div>
<div class="a" style="left:10px;top:145px;font-size:12px;line-height:14px">通道名稱</div>
<div class="a" style="left:8px;top:184px;width:13px;height:13px;border:1px solid #cfcbb9;background:#bababa"></div>
<div class="a" style="left:10px;top:190px;width:9px;height:2px;background:#000"></div>
<div class="a" style="left:22px;top:190px;width:8px;height:1px;background:repeating-linear-gradient(90deg,#cbc7b6 0 1px,transparent 1px 3px)"></div>
<div class="a" style="left:30px;top:192px;width:26px;height:1px;background:#808080"></div>
<div class="tl" style="left:60px;top:184px;letter-spacing:-1px">Bus1</div>
<div class="a" style="left:14px;top:197px;width:1px;height:536px;background:repeating-linear-gradient(180deg,#cbc7b6 0 1px,transparent 1px 3px)"></div>
<div class="a" style="left:43px;top:216px;width:1px;height:376px;background:repeating-linear-gradient(180deg,#cbc7b6 0 1px,transparent 1px 3px)"></div>
<div class="a" style="left:44px;top:242px;width:15px;height:1px;background:repeating-linear-gradient(90deg,#cbc7b6 0 1px,transparent 1px 3px)"></div>
<svg class="a" style="left:74px;top:235px" width="11" height="11" shape-rendering="crispEdges"><rect x="10" y="0" width="1" height="1" fill="#800000"/><rect x="9" y="1" width="1" height="1" fill="#800000"/><rect x="8" y="2" width="2" height="1" fill="#800000"/><rect x="5" y="3" width="4" height="1" fill="#800000"/><rect x="4" y="4" width="5" height="1" fill="#800000"/><rect x="3" y="5" width="5" height="1" fill="#800000"/><rect x="2" y="6" width="6" height="1" fill="#800000"/><rect x="1" y="7" width="6" height="1" fill="#800000"/><rect x="0" y="8" width="6" height="1" fill="#800000"/><rect x="0" y="9" width="5" height="1" fill="#800000"/><rect x="1" y="10" width="3" height="1" fill="#800000"/></svg>
<div class="tl" style="left:89px;top:234px;letter-spacing:-1px">A0</div>
<div class="tl" style="left:108px;top:234px;letter-spacing:-1px;color:#9a9a9a;width:11px;overflow:hidden">A0</div>
<div class="a" style="left:44px;top:292px;width:15px;height:1px;background:repeating-linear-gradient(90deg,#cbc7b6 0 1px,transparent 1px 3px)"></div>
<svg class="a" style="left:74px;top:285px" width="11" height="11" shape-rendering="crispEdges"><rect x="10" y="0" width="1" height="1" fill="#ff1010"/><rect x="9" y="1" width="1" height="1" fill="#ff1010"/><rect x="8" y="2" width="2" height="1" fill="#ff1010"/><rect x="5" y="3" width="4" height="1" fill="#ff1010"/><rect x="4" y="4" width="5" height="1" fill="#ff1010"/><rect x="3" y="5" width="5" height="1" fill="#ff1010"/><rect x="2" y="6" width="6" height="1" fill="#ff1010"/><rect x="1" y="7" width="6" height="1" fill="#ff1010"/><rect x="0" y="8" width="6" height="1" fill="#ff1010"/><rect x="0" y="9" width="5" height="1" fill="#ff1010"/><rect x="1" y="10" width="3" height="1" fill="#ff1010"/></svg>
<div class="a" style="left:88px;top:267px;width:18px;height:48px;background:#0a62f8"></div>
<div class="tl" style="left:89px;top:284px;letter-spacing:-1px;color:#fff">A1</div>
<div class="tl" style="left:108px;top:284px;letter-spacing:-1px;color:#9a9a9a;width:11px;overflow:hidden">A1</div>
<div class="a" style="left:44px;top:342px;width:15px;height:1px;background:repeating-linear-gradient(90deg,#cbc7b6 0 1px,transparent 1px 3px)"></div>
<svg class="a" style="left:74px;top:335px" width="11" height="11" shape-rendering="crispEdges"><rect x="10" y="0" width="1" height="1" fill="#d05020"/><rect x="9" y="1" width="1" height="1" fill="#d05020"/><rect x="8" y="2" width="2" height="1" fill="#d05020"/><rect x="5" y="3" width="4" height="1" fill="#d05020"/><rect x="4" y="4" width="5" height="1" fill="#d05020"/><rect x="3" y="5" width="5" height="1" fill="#d05020"/><rect x="2" y="6" width="6" height="1" fill="#d05020"/><rect x="1" y="7" width="6" height="1" fill="#d05020"/><rect x="0" y="8" width="6" height="1" fill="#d05020"/><rect x="0" y="9" width="5" height="1" fill="#d05020"/><rect x="1" y="10" width="3" height="1" fill="#d05020"/></svg>
<div class="tl" style="left:89px;top:334px;letter-spacing:-1px">A2</div>
<div class="tl" style="left:108px;top:334px;letter-spacing:-1px;color:#9a9a9a;width:11px;overflow:hidden">A2</div>
<div class="a" style="left:44px;top:392px;width:15px;height:1px;background:repeating-linear-gradient(90deg,#cbc7b6 0 1px,transparent 1px 3px)"></div>
<svg class="a" style="left:74px;top:385px" width="11" height="11" shape-rendering="crispEdges"><rect x="10" y="0" width="1" height="1" fill="#ffff00"/><rect x="9" y="1" width="1" height="1" fill="#ffff00"/><rect x="8" y="2" width="2" height="1" fill="#ffff00"/><rect x="5" y="3" width="4" height="1" fill="#ffff00"/><rect x="4" y="4" width="5" height="1" fill="#ffff00"/><rect x="3" y="5" width="5" height="1" fill="#ffff00"/><rect x="2" y="6" width="6" height="1" fill="#ffff00"/><rect x="1" y="7" width="6" height="1" fill="#ffff00"/><rect x="0" y="8" width="6" height="1" fill="#ffff00"/><rect x="0" y="9" width="5" height="1" fill="#ffff00"/><rect x="1" y="10" width="3" height="1" fill="#ffff00"/></svg>
<div class="tl" style="left:89px;top:384px;letter-spacing:-1px">A3</div>
<div class="tl" style="left:108px;top:384px;letter-spacing:-1px;color:#9a9a9a;width:11px;overflow:hidden">A3</div>
<div class="a" style="left:44px;top:442px;width:15px;height:1px;background:repeating-linear-gradient(90deg,#cbc7b6 0 1px,transparent 1px 3px)"></div>
<svg class="a" style="left:74px;top:435px" width="11" height="11" shape-rendering="crispEdges"><rect x="10" y="0" width="1" height="1" fill="#00e000"/><rect x="9" y="1" width="1" height="1" fill="#00e000"/><rect x="8" y="2" width="2" height="1" fill="#00e000"/><rect x="5" y="3" width="4" height="1" fill="#00e000"/><rect x="4" y="4" width="5" height="1" fill="#00e000"/><rect x="3" y="5" width="5" height="1" fill="#00e000"/><rect x="2" y="6" width="6" height="1" fill="#00e000"/><rect x="1" y="7" width="6" height="1" fill="#00e000"/><rect x="0" y="8" width="6" height="1" fill="#00e000"/><rect x="0" y="9" width="5" height="1" fill="#00e000"/><rect x="1" y="10" width="3" height="1" fill="#00e000"/></svg>
<div class="tl" style="left:89px;top:434px;letter-spacing:-1px">A4</div>
<div class="tl" style="left:108px;top:434px;letter-spacing:-1px;color:#9a9a9a;width:11px;overflow:hidden">A4</div>
<div class="a" style="left:44px;top:492px;width:15px;height:1px;background:repeating-linear-gradient(90deg,#cbc7b6 0 1px,transparent 1px 3px)"></div>
<svg class="a" style="left:74px;top:485px" width="11" height="11" shape-rendering="crispEdges"><rect x="10" y="0" width="1" height="1" fill="#0000f0"/><rect x="9" y="1" width="1" height="1" fill="#0000f0"/><rect x="8" y="2" width="2" height="1" fill="#0000f0"/><rect x="5" y="3" width="4" height="1" fill="#0000f0"/><rect x="4" y="4" width="5" height="1" fill="#0000f0"/><rect x="3" y="5" width="5" height="1" fill="#0000f0"/><rect x="2" y="6" width="6" height="1" fill="#0000f0"/><rect x="1" y="7" width="6" height="1" fill="#0000f0"/><rect x="0" y="8" width="6" height="1" fill="#0000f0"/><rect x="0" y="9" width="5" height="1" fill="#0000f0"/><rect x="1" y="10" width="3" height="1" fill="#0000f0"/></svg>
<div class="tl" style="left:89px;top:484px;letter-spacing:-1px">A5</div>
<div class="tl" style="left:108px;top:484px;letter-spacing:-1px;color:#9a9a9a;width:11px;overflow:hidden">A5</div>
<div class="a" style="left:44px;top:542px;width:15px;height:1px;background:repeating-linear-gradient(90deg,#cbc7b6 0 1px,transparent 1px 3px)"></div>
<svg class="a" style="left:74px;top:535px" width="11" height="11" shape-rendering="crispEdges"><rect x="10" y="0" width="1" height="1" fill="#8000a0"/><rect x="9" y="1" width="1" height="1" fill="#8000a0"/><rect x="8" y="2" width="2" height="1" fill="#8000a0"/><rect x="5" y="3" width="4" height="1" fill="#8000a0"/><rect x="4" y="4" width="5" height="1" fill="#8000a0"/><rect x="3" y="5" width="5" height="1" fill="#8000a0"/><rect x="2" y="6" width="6" height="1" fill="#8000a0"/><rect x="1" y="7" width="6" height="1" fill="#8000a0"/><rect x="0" y="8" width="6" height="1" fill="#8000a0"/><rect x="0" y="9" width="5" height="1" fill="#8000a0"/><rect x="1" y="10" width="3" height="1" fill="#8000a0"/></svg>
<div class="tl" style="left:89px;top:534px;letter-spacing:-1px">A6</div>
<div class="tl" style="left:108px;top:534px;letter-spacing:-1px;color:#9a9a9a;width:11px;overflow:hidden">A6</div>
<div class="a" style="left:44px;top:592px;width:15px;height:1px;background:repeating-linear-gradient(90deg,#cbc7b6 0 1px,transparent 1px 3px)"></div>
<svg class="a" style="left:74px;top:585px" width="11" height="11" shape-rendering="crispEdges"><rect x="10" y="0" width="1" height="1" fill="#808080"/><rect x="9" y="1" width="1" height="1" fill="#808080"/><rect x="8" y="2" width="2" height="1" fill="#808080"/><rect x="5" y="3" width="4" height="1" fill="#808080"/><rect x="4" y="4" width="5" height="1" fill="#808080"/><rect x="3" y="5" width="5" height="1" fill="#808080"/><rect x="2" y="6" width="6" height="1" fill="#808080"/><rect x="1" y="7" width="6" height="1" fill="#808080"/><rect x="0" y="8" width="6" height="1" fill="#808080"/><rect x="0" y="9" width="5" height="1" fill="#808080"/><rect x="1" y="10" width="3" height="1" fill="#808080"/></svg>
<div class="tl" style="left:89px;top:584px;letter-spacing:-1px">A7</div>
<div class="tl" style="left:108px;top:584px;letter-spacing:-1px;color:#9a9a9a;width:11px;overflow:hidden">A7</div>
<div class="a" style="left:15px;top:642px;width:15px;height:1px;background:repeating-linear-gradient(90deg,#cbc7b6 0 1px,transparent 1px 3px)"></div>
<svg class="a" style="left:45px;top:635px" width="11" height="11" shape-rendering="crispEdges"><rect x="10" y="0" width="1" height="1" fill="#800000"/><rect x="9" y="1" width="1" height="1" fill="#800000"/><rect x="8" y="2" width="2" height="1" fill="#800000"/><rect x="5" y="3" width="4" height="1" fill="#800000"/><rect x="4" y="4" width="5" height="1" fill="#800000"/><rect x="3" y="5" width="5" height="1" fill="#800000"/><rect x="2" y="6" width="6" height="1" fill="#800000"/><rect x="1" y="7" width="6" height="1" fill="#800000"/><rect x="0" y="8" width="6" height="1" fill="#800000"/><rect x="0" y="9" width="5" height="1" fill="#800000"/><rect x="1" y="10" width="3" height="1" fill="#800000"/></svg>
<div class="tl" style="left:60px;top:634px;letter-spacing:-1px">B0</div>
<div class="tl" style="left:79px;top:634px;letter-spacing:-1px;color:#9a9a9a;width:40px;overflow:hidden">B0</div>
<div class="a" style="left:15px;top:692px;width:15px;height:1px;background:repeating-linear-gradient(90deg,#cbc7b6 0 1px,transparent 1px 3px)"></div>
<svg class="a" style="left:45px;top:685px" width="11" height="11" shape-rendering="crispEdges"><rect x="10" y="0" width="1" height="1" fill="#ff1010"/><rect x="9" y="1" width="1" height="1" fill="#ff1010"/><rect x="8" y="2" width="2" height="1" fill="#ff1010"/><rect x="5" y="3" width="4" height="1" fill="#ff1010"/><rect x="4" y="4" width="5" height="1" fill="#ff1010"/><rect x="3" y="5" width="5" height="1" fill="#ff1010"/><rect x="2" y="6" width="6" height="1" fill="#ff1010"/><rect x="1" y="7" width="6" height="1" fill="#ff1010"/><rect x="0" y="8" width="6" height="1" fill="#ff1010"/><rect x="0" y="9" width="5" height="1" fill="#ff1010"/><rect x="1" y="10" width="3" height="1" fill="#ff1010"/></svg>
<div class="tl" style="left:60px;top:684px;letter-spacing:-1px">B1</div>
<div class="tl" style="left:79px;top:684px;letter-spacing:-1px;color:#9a9a9a;width:40px;overflow:hidden">B1</div>
<div class="a" style="left:119px;top:137px;width:1px;height:613px;background:#aca899"></div>
<div class="a" style="left:123px;top:137px;width:60px;height:613px;border:1px solid #aca899"></div>
<div class="a" style="left:124px;top:138px;width:58px;height:27px;box-shadow:inset 1px 1px 0 #fbfaf4"></div>
<div class="a" style="left:124px;top:165px;width:58px;height:1px;background:#aca899"></div>
<div class="a" style="left:129px;top:144px;font-size:12px;line-height:14px">觸發條件</div>
<div class="a" style="left:186px;top:137px;width:57px;height:613px;border:1px solid #aca899"></div>
<div class="a" style="left:187px;top:138px;width:55px;height:27px;box-shadow:inset 1px 1px 0 #fbfaf4"></div>
<div class="a" style="left:187px;top:165px;width:55px;height:1px;background:#aca899"></div>
<div class="a" style="left:190px;top:144px;font-size:12px;line-height:14px">濾波條件</div>
<div class="a" style="left:123px;top:166px;width:59px;height:49px;border:1px solid #aca899;border-bottom:1px solid #aca899;box-shadow:inset 1px 1px 0 #f8f6ee"></div>
<div class="a" style="left:188px;top:166px;width:54px;height:49px;border:1px solid #aca899;border-bottom:1px solid #aca899;box-shadow:inset 1px 1px 0 #f8f6ee"></div>
<svg class="a" style="left:208px;top:184px" width="13" height="13" viewBox="0 0 13 13"><rect x="0" y="0" width="13" height="13" fill="#c4c4c4"/><rect x="0.5" y="0.5" width="12" height="12" fill="none" stroke="#808080" stroke-dasharray="1 1"/><path d="M1 1L12 12M12 1L1 12" stroke="#8a8a8a" stroke-width="1"/></svg>
<div class="a" style="left:123px;top:216px;width:59px;height:49px;border:1px solid #aca899;border-bottom:1px solid #aca899;box-shadow:inset 1px 1px 0 #f8f6ee"></div>
<div class="a" style="left:188px;top:216px;width:54px;height:49px;border:1px solid #aca899;border-bottom:1px solid #aca899;box-shadow:inset 1px 1px 0 #f8f6ee"></div>
<svg class="a" style="left:146px;top:234px" width="13" height="13" viewBox="0 0 13 13"><rect x="0" y="0" width="13" height="13" fill="#c4c4c4"/><rect x="0.5" y="0.5" width="12" height="12" fill="none" stroke="#808080" stroke-dasharray="1 1"/><path d="M0 11H4L7.5 3H13" stroke="#000" stroke-width="2" fill="none"/></svg>
<svg class="a" style="left:208px;top:234px" width="13" height="13" viewBox="0 0 13 13"><rect x="0" y="0" width="13" height="13" fill="#c4c4c4"/><rect x="0.5" y="0.5" width="12" height="12" fill="none" stroke="#808080" stroke-dasharray="1 1"/><path d="M1 1L12 12M12 1L1 12" stroke="#8a8a8a" stroke-width="1"/></svg>
<div class="a" style="left:124px;top:266px;width:57px;height:49px;background:#ece9d8;border-top:1px solid #000;border-left:1px solid #000;border-right:1px solid #fff;border-bottom:1px solid #fff"></div>
<div class="a" style="left:172px;top:267px;width:1px;height:47px;background:#aca899"></div>
<div class="dd" style="left:174px;top:290px;border-left-width:3px;border-right-width:3px;border-top-width:4px"></div>
<div class="a" style="left:188px;top:266px;width:53px;height:49px;background:#ece9d8;border-top:1px solid #000;border-left:1px solid #000;border-right:1px solid #fff;border-bottom:1px solid #fff"></div>
<div class="a" style="left:232px;top:267px;width:1px;height:47px;background:#aca899"></div>
<div class="dd" style="left:234px;top:290px;border-left-width:3px;border-right-width:3px;border-top-width:4px"></div>
<svg class="a" style="left:146px;top:284px" width="13" height="13" viewBox="0 0 13 13"><rect x="0" y="0" width="13" height="13" fill="#c4c4c4"/><rect x="0.5" y="0.5" width="12" height="12" fill="none" stroke="#808080" stroke-dasharray="1 1"/><path d="M1 1L12 12M12 1L1 12" stroke="#8a8a8a" stroke-width="1"/></svg>
<svg class="a" style="left:208px;top:284px" width="13" height="13" viewBox="0 0 13 13"><rect x="0" y="0" width="13" height="13" fill="#c4c4c4"/><rect x="0.5" y="0.5" width="12" height="12" fill="none" stroke="#808080" stroke-dasharray="1 1"/><path d="M1 1L12 12M12 1L1 12" stroke="#8a8a8a" stroke-width="1"/></svg>
<div class="a" style="left:123px;top:316px;width:59px;height:49px;border:1px solid #aca899;border-bottom:1px solid #aca899;box-shadow:inset 1px 1px 0 #f8f6ee"></div>
<div class="a" style="left:188px;top:316px;width:54px;height:49px;border:1px solid #aca899;border-bottom:1px solid #aca899;box-shadow:inset 1px 1px 0 #f8f6ee"></div>
<svg class="a" style="left:146px;top:334px" width="13" height="13" viewBox="0 0 13 13"><rect x="0" y="0" width="13" height="13" fill="#c4c4c4"/><rect x="0.5" y="0.5" width="12" height="12" fill="none" stroke="#808080" stroke-dasharray="1 1"/><path d="M1 1L12 12M12 1L1 12" stroke="#8a8a8a" stroke-width="1"/></svg>
<svg class="a" style="left:208px;top:334px" width="13" height="13" viewBox="0 0 13 13"><rect x="0" y="0" width="13" height="13" fill="#c4c4c4"/><rect x="0.5" y="0.5" width="12" height="12" fill="none" stroke="#808080" stroke-dasharray="1 1"/><path d="M1 1L12 12M12 1L1 12" stroke="#8a8a8a" stroke-width="1"/></svg>
<div class="a" style="left:123px;top:366px;width:59px;height:49px;border:1px solid #aca899;border-bottom:1px solid #aca899;box-shadow:inset 1px 1px 0 #f8f6ee"></div>
<div class="a" style="left:188px;top:366px;width:54px;height:49px;border:1px solid #aca899;border-bottom:1px solid #aca899;box-shadow:inset 1px 1px 0 #f8f6ee"></div>
<svg class="a" style="left:146px;top:384px" width="13" height="13" viewBox="0 0 13 13"><rect x="0" y="0" width="13" height="13" fill="#c4c4c4"/><rect x="0.5" y="0.5" width="12" height="12" fill="none" stroke="#808080" stroke-dasharray="1 1"/><path d="M1 1L12 12M12 1L1 12" stroke="#8a8a8a" stroke-width="1"/></svg>
<svg class="a" style="left:208px;top:384px" width="13" height="13" viewBox="0 0 13 13"><rect x="0" y="0" width="13" height="13" fill="#c4c4c4"/><rect x="0.5" y="0.5" width="12" height="12" fill="none" stroke="#808080" stroke-dasharray="1 1"/><path d="M1 1L12 12M12 1L1 12" stroke="#8a8a8a" stroke-width="1"/></svg>
<div class="a" style="left:123px;top:416px;width:59px;height:49px;border:1px solid #aca899;border-bottom:1px solid #aca899;box-shadow:inset 1px 1px 0 #f8f6ee"></div>
<div class="a" style="left:188px;top:416px;width:54px;height:49px;border:1px solid #aca899;border-bottom:1px solid #aca899;box-shadow:inset 1px 1px 0 #f8f6ee"></div>
<svg class="a" style="left:146px;top:434px" width="13" height="13" viewBox="0 0 13 13"><rect x="0" y="0" width="13" height="13" fill="#c4c4c4"/><rect x="0.5" y="0.5" width="12" height="12" fill="none" stroke="#808080" stroke-dasharray="1 1"/><path d="M1 1L12 12M12 1L1 12" stroke="#8a8a8a" stroke-width="1"/></svg>
<svg class="a" style="left:208px;top:434px" width="13" height="13" viewBox="0 0 13 13"><rect x="0" y="0" width="13" height="13" fill="#c4c4c4"/><rect x="0.5" y="0.5" width="12" height="12" fill="none" stroke="#808080" stroke-dasharray="1 1"/><path d="M1 1L12 12M12 1L1 12" stroke="#8a8a8a" stroke-width="1"/></svg>
<div class="a" style="left:123px;top:466px;width:59px;height:49px;border:1px solid #aca899;border-bottom:1px solid #aca899;box-shadow:inset 1px 1px 0 #f8f6ee"></div>
<div class="a" style="left:188px;top:466px;width:54px;height:49px;border:1px solid #aca899;border-bottom:1px solid #aca899;box-shadow:inset 1px 1px 0 #f8f6ee"></div>
<svg class="a" style="left:146px;top:484px" width="13" height="13" viewBox="0 0 13 13"><rect x="0" y="0" width="13" height="13" fill="#c4c4c4"/><rect x="0.5" y="0.5" width="12" height="12" fill="none" stroke="#808080" stroke-dasharray="1 1"/><path d="M1 1L12 12M12 1L1 12" stroke="#8a8a8a" stroke-width="1"/></svg>
<svg class="a" style="left:208px;top:484px" width="13" height="13" viewBox="0 0 13 13"><rect x="0" y="0" width="13" height="13" fill="#c4c4c4"/><rect x="0.5" y="0.5" width="12" height="12" fill="none" stroke="#808080" stroke-dasharray="1 1"/><path d="M1 1L12 12M12 1L1 12" stroke="#8a8a8a" stroke-width="1"/></svg>
<div class="a" style="left:123px;top:516px;width:59px;height:49px;border:1px solid #aca899;border-bottom:1px solid #aca899;box-shadow:inset 1px 1px 0 #f8f6ee"></div>
<div class="a" style="left:188px;top:516px;width:54px;height:49px;border:1px solid #aca899;border-bottom:1px solid #aca899;box-shadow:inset 1px 1px 0 #f8f6ee"></div>
<svg class="a" style="left:146px;top:534px" width="13" height="13" viewBox="0 0 13 13"><rect x="0" y="0" width="13" height="13" fill="#c4c4c4"/><rect x="0.5" y="0.5" width="12" height="12" fill="none" stroke="#808080" stroke-dasharray="1 1"/><path d="M1 1L12 12M12 1L1 12" stroke="#8a8a8a" stroke-width="1"/></svg>
<svg class="a" style="left:208px;top:534px" width="13" height="13" viewBox="0 0 13 13"><rect x="0" y="0" width="13" height="13" fill="#c4c4c4"/><rect x="0.5" y="0.5" width="12" height="12" fill="none" stroke="#808080" stroke-dasharray="1 1"/><path d="M1 1L12 12M12 1L1 12" stroke="#8a8a8a" stroke-width="1"/></svg>
<div class="a" style="left:123px;top:566px;width:59px;height:49px;border:1px solid #aca899;border-bottom:1px solid #aca899;box-shadow:inset 1px 1px 0 #f8f6ee"></div>
<div class="a" style="left:188px;top:566px;width:54px;height:49px;border:1px solid #aca899;border-bottom:1px solid #aca899;box-shadow:inset 1px 1px 0 #f8f6ee"></div>
<svg class="a" style="left:146px;top:584px" width="13" height="13" viewBox="0 0 13 13"><rect x="0" y="0" width="13" height="13" fill="#c4c4c4"/><rect x="0.5" y="0.5" width="12" height="12" fill="none" stroke="#808080" stroke-dasharray="1 1"/><path d="M1 1L12 12M12 1L1 12" stroke="#8a8a8a" stroke-width="1"/></svg>
<svg class="a" style="left:208px;top:584px" width="13" height="13" viewBox="0 0 13 13"><rect x="0" y="0" width="13" height="13" fill="#c4c4c4"/><rect x="0.5" y="0.5" width="12" height="12" fill="none" stroke="#808080" stroke-dasharray="1 1"/><path d="M1 1L12 12M12 1L1 12" stroke="#8a8a8a" stroke-width="1"/></svg>
<div class="a" style="left:123px;top:616px;width:59px;height:49px;border:1px solid #aca899;border-bottom:1px solid #aca899;box-shadow:inset 1px 1px 0 #f8f6ee"></div>
<div class="a" style="left:188px;top:616px;width:54px;height:49px;border:1px solid #aca899;border-bottom:1px solid #aca899;box-shadow:inset 1px 1px 0 #f8f6ee"></div>
<svg class="a" style="left:146px;top:634px" width="13" height="13" viewBox="0 0 13 13"><rect x="0" y="0" width="13" height="13" fill="#c4c4c4"/><rect x="0.5" y="0.5" width="12" height="12" fill="none" stroke="#808080" stroke-dasharray="1 1"/><path d="M1 1L12 12M12 1L1 12" stroke="#8a8a8a" stroke-width="1"/></svg>
<svg class="a" style="left:208px;top:634px" width="13" height="13" viewBox="0 0 13 13"><rect x="0" y="0" width="13" height="13" fill="#c4c4c4"/><rect x="0.5" y="0.5" width="12" height="12" fill="none" stroke="#808080" stroke-dasharray="1 1"/><path d="M1 1L12 12M12 1L1 12" stroke="#8a8a8a" stroke-width="1"/></svg>
<div class="a" style="left:123px;top:666px;width:59px;height:49px;border:1px solid #aca899;border-bottom:1px solid #aca899;box-shadow:inset 1px 1px 0 #f8f6ee"></div>
<div class="a" style="left:188px;top:666px;width:54px;height:49px;border:1px solid #aca899;border-bottom:1px solid #aca899;box-shadow:inset 1px 1px 0 #f8f6ee"></div>
<svg class="a" style="left:146px;top:684px" width="13" height="13" viewBox="0 0 13 13"><rect x="0" y="0" width="13" height="13" fill="#c4c4c4"/><rect x="0.5" y="0.5" width="12" height="12" fill="none" stroke="#808080" stroke-dasharray="1 1"/><path d="M1 1L12 12M12 1L1 12" stroke="#8a8a8a" stroke-width="1"/></svg>
<svg class="a" style="left:208px;top:684px" width="13" height="13" viewBox="0 0 13 13"><rect x="0" y="0" width="13" height="13" fill="#c4c4c4"/><rect x="0.5" y="0.5" width="12" height="12" fill="none" stroke="#808080" stroke-dasharray="1 1"/><path d="M1 1L12 12M12 1L1 12" stroke="#8a8a8a" stroke-width="1"/></svg>
<div class="a" style="left:123px;top:716px;width:59px;height:18px;border:1px solid #aca899;box-shadow:inset 1px 1px 0 #f8f6ee"></div>
<div class="a" style="left:188px;top:716px;width:54px;height:18px;border:1px solid #aca899;box-shadow:inset 1px 1px 0 #f8f6ee"></div>
<div class="a" style="left:246px;top:137px;width:1px;height:613px;background:#aca899"></div>
<div class="a" style="left:243px;top:398px;width:3px;height:15px;background:#b4bcd8"></div>
<svg class="a" style="left:243px;top:401px" width="3" height="10" viewBox="0 0 3 10"><path d="M3 0L0 5 3 10z" fill="#000"/></svg>
<svg class="a" style="left:0;top:0" width="1024" height="768" viewBox="0 0 1024 768" shape-rendering="crispEdges"><rect x="247" y="137" width="759" height="30" fill="#c0c0c0"/><rect x="247" y="166" width="759" height="1" fill="#000"/><rect x="247" y="158" width="1" height="8" fill="#000"/><rect x="262" y="161" width="1" height="5" fill="#000"/><rect x="277" y="161" width="1" height="5" fill="#000"/><rect x="292" y="161" width="1" height="5" fill="#000"/><rect x="307" y="161" width="1" height="5" fill="#000"/><rect x="322" y="158" width="1" height="8" fill="#000"/><rect x="337" y="161" width="1" height="5" fill="#000"/><rect x="352" y="161" width="1" height="5" fill="#000"/><rect x="367" y="161" width="1" height="5" fill="#000"/><rect x="382" y="161" width="1" height="5" fill="#000"/><rect x="397" y="158" width="1" height="8" fill="#000"/><rect x="412" y="161" width="1" height="5" fill="#000"/><rect x="427" y="161" width="1" height="5" fill="#000"/><rect x="442" y="161" width="1" height="5" fill="#000"/><rect x="457" y="161" width="1" height="5" fill="#000"/><rect x="472" y="158" width="1" height="8" fill="#000"/><rect x="487" y="161" width="1" height="5" fill="#000"/><rect x="502" y="161" width="1" height="5" fill="#000"/><rect x="517" y="161" width="1" height="5" fill="#000"/><rect x="532" y="161" width="1" height="5" fill="#000"/><rect x="547" y="158" width="1" height="8" fill="#000"/><rect x="562" y="161" width="1" height="5" fill="#000"/><rect x="577" y="161" width="1" height="5" fill="#000"/><rect x="592" y="161" width="1" height="5" fill="#000"/><rect x="607" y="161" width="1" height="5" fill="#000"/><rect x="621" y="160" width="3" height="6" fill="#000"/><rect x="637" y="161" width="1" height="5" fill="#000"/><rect x="652" y="161" width="1" height="5" fill="#000"/><rect x="667" y="161" width="1" height="5" fill="#000"/><rect x="682" y="161" width="1" height="5" fill="#000"/><rect x="697" y="158" width="1" height="8" fill="#000"/><rect x="712" y="161" width="1" height="5" fill="#000"/><rect x="727" y="161" width="1" height="5" fill="#000"/><rect x="742" y="161" width="1" height="5" fill="#000"/><rect x="757" y="161" width="1" height="5" fill="#000"/><rect x="772" y="158" width="1" height="8" fill="#000"/><rect x="787" y="161" width="1" height="5" fill="#000"/><rect x="802" y="161" width="1" height="5" fill="#000"/><rect x="817" y="161" width="1" height="5" fill="#000"/><rect x="832" y="161" width="1" height="5" fill="#000"/><rect x="847" y="158" width="1" height="8" fill="#000"/><rect x="862" y="161" width="1" height="5" fill="#000"/><rect x="877" y="161" width="1" height="5" fill="#000"/><rect x="892" y="161" width="1" height="5" fill="#000"/><rect x="907" y="161" width="1" height="5" fill="#000"/><rect x="922" y="158" width="1" height="8" fill="#000"/><rect x="937" y="161" width="1" height="5" fill="#000"/><rect x="952" y="161" width="1" height="5" fill="#000"/><rect x="967" y="161" width="1" height="5" fill="#000"/><rect x="982" y="161" width="1" height="5" fill="#000"/><rect x="997" y="158" width="1" height="8" fill="#000"/><rect x="247" y="167" width="759" height="566" fill="#fff"/><rect x="295" y="169" width="1" height="4" fill="#008000"/><rect x="294" y="173" width="1" height="7" fill="#008000"/><rect x="293" y="180" width="1" height="8" fill="#008000"/><rect x="293" y="195" width="1" height="8" fill="#008000"/><rect x="294" y="203" width="1" height="7" fill="#008000"/><rect x="295" y="210" width="1" height="4" fill="#008000"/><rect x="296" y="169" width="710" height="1" fill="#008000"/><rect x="296" y="213" width="710" height="1" fill="#008000"/><rect x="546" y="169" width="2" height="3" fill="#008000"/><rect x="552" y="169" width="2" height="3" fill="#008000"/><rect x="547" y="172" width="2" height="9" fill="#008000"/><rect x="551" y="172" width="2" height="9" fill="#008000"/><rect x="548" y="181" width="4" height="7" fill="#008000"/><rect x="549" y="188" width="2" height="7" fill="#008000"/><rect x="548" y="195" width="4" height="7" fill="#008000"/><rect x="547" y="202" width="2" height="8" fill="#008000"/><rect x="551" y="202" width="2" height="8" fill="#008000"/><rect x="546" y="210" width="2" height="4" fill="#008000"/><rect x="552" y="210" width="2" height="4" fill="#008000"/><rect x="880" y="169" width="5" height="1" fill="#fff"/><rect x="880" y="213" width="5" height="1" fill="#fff"/><rect x="879" y="169" width="1" height="3" fill="#008000"/><rect x="885" y="169" width="1" height="3" fill="#008000"/><rect x="880" y="172" width="1" height="8" fill="#008000"/><rect x="884" y="172" width="1" height="8" fill="#008000"/><rect x="881" y="180" width="1" height="8" fill="#008000"/><rect x="883" y="180" width="1" height="8" fill="#008000"/><rect x="882" y="188" width="1" height="7" fill="#008000"/><rect x="882" y="188" width="1" height="7" fill="#008000"/><rect x="881" y="195" width="1" height="7" fill="#008000"/><rect x="883" y="195" width="1" height="7" fill="#008000"/><rect x="880" y="202" width="1" height="8" fill="#008000"/><rect x="884" y="202" width="1" height="8" fill="#008000"/><rect x="879" y="210" width="1" height="4" fill="#008000"/><rect x="885" y="210" width="1" height="4" fill="#008000"/><rect x="293" y="218" width="257" height="2" fill="#800000"/><rect x="549" y="218" width="1" height="46" fill="#800000"/><rect x="549" y="263" width="334" height="1" fill="#800000"/><rect x="882" y="218" width="1" height="46" fill="#800000"/><rect x="882" y="218" width="124" height="2" fill="#800000"/><rect x="293" y="268" width="257" height="2" fill="#ff0000"/><rect x="549" y="268" width="1" height="46" fill="#ff0000"/><rect x="549" y="313" width="457" height="1" fill="#ff0000"/><rect x="293" y="318" width="257" height="1" fill="#ff8040"/><rect x="549" y="318" width="1" height="46" fill="#ff8040"/><rect x="549" y="363" width="457" height="1" fill="#ff8040"/><rect x="293" y="413" width="258" height="1" fill="#ffff00"/><rect x="550" y="369" width="1" height="45" fill="#ffff00"/><rect x="550" y="369" width="456" height="2" fill="#ffff00"/><rect x="293" y="463" width="713" height="1" fill="#00ff80"/><rect x="293" y="513" width="713" height="1" fill="#0000ff"/><rect x="293" y="518" width="713" height="2" fill="#ff00ff"/><rect x="293" y="613" width="713" height="1" fill="#808080"/><rect x="293" y="663" width="713" height="1" fill="#800000"/><rect x="293" y="713" width="713" height="1" fill="#ff0000"/><rect x="292" y="167" width="1" height="566" fill="#0080ff"/><rect x="292" y="150" width="1" height="4" fill="#0080ff"/><rect x="283" y="138" width="18" height="12" fill="#0080ff"/><rect x="283" y="150" width="19" height="1" fill="#000"/><rect x="301" y="138" width="1" height="13" fill="#000"/><text x="285.5" y="145.5" font-family="Liberation Serif" font-size="10" fill="#ff8000">Ds</text><rect x="997" y="147" width="9" height="13" fill="#0080ff"/><rect x="1000" y="141" width="6" height="4" fill="#ffff00"/><rect x="1000" y="145" width="6" height="2" fill="#00ffff"/><rect x="1003" y="145" width="3" height="1" fill="#ff0000"/><rect x="997" y="159" width="9" height="1" fill="#000"/><rect x="997" y="159" width="1" height="7" fill="#000"/><text x="998" y="157" font-family="Liberation Serif" font-size="11" fill="#ff8000">D</text><path d="M615.5 137H629.5L622.5 145z" fill="#ff0000" shape-rendering="auto"/></svg>
<div class="a" style="left:247px;top:137px;width:750px;height:29px;overflow:hidden">
<div class="rl" style="left:57px;top:11px;line-height:12px">147.653us</div>
<div class="rl" style="left:132px;top:11px;line-height:12px">148.126us</div>
<div class="rl" style="left:207px;top:11px;line-height:12px">148.599us</div>
<div class="rl" style="left:282px;top:11px;line-height:12px">149.073us</div>
<div class="rl" style="left:357px;top:11px;line-height:12px">149.546us</div>
<div class="rl" style="left:432px;top:11px;line-height:12px">150.02us</div>
<div class="rl" style="left:508px;top:11px;line-height:12px">150.493us</div>
<div class="rl" style="left:583px;top:11px;line-height:12px">150.966us</div>
<div class="rl" style="left:658px;top:11px;line-height:12px">151.44us</div>
<div class="rl" style="left:733px;top:11px;line-height:12px">151.9</div>
</div>
<div class="a" style="left:980px;top:148px;width:17px;height:12px;overflow:hidden"><div class="rl" style="left:0;top:0;line-height:12px">151.9</div></div>
<div class="a" style="left:361px;top:183px;width:120px;text-align:center;font-family:'Liberation Serif',serif;font-size:19px;line-height:18px;transform:scaleX(.845)">0X47</div>
<div class="a" style="left:656px;top:183px;width:120px;text-align:center;font-family:'Liberation Serif',serif;font-size:19px;line-height:18px;transform:scaleX(.845)">0X48</div>
<div class="a" style="left:357px;top:241px;width:120px;text-align:center;font-family:'Liberation Serif',serif;font-size:19px;line-height:18px;transform:scaleX(.845)">1.625us</div>
<div class="a" style="left:651px;top:241px;width:120px;text-align:center;font-family:'Liberation Serif',serif;font-size:19px;line-height:18px;transform:scaleX(.845)">2.105us</div>
<div class="a" style="left:357px;top:291px;width:120px;text-align:center;font-family:'Liberation Serif',serif;font-size:19px;line-height:18px;transform:scaleX(.845)">1.625us</div>
<div class="a" style="left:784px;top:291px;width:120px;text-align:center;font-family:'Liberation Serif',serif;font-size:19px;line-height:18px;transform:scaleX(.845)">4.21us</div>
<div class="a" style="left:357px;top:341px;width:120px;text-align:center;font-family:'Liberation Serif',serif;font-size:19px;line-height:18px;transform:scaleX(.845)">1.625us</div>
<div class="a" style="left:784px;top:341px;width:120px;text-align:center;font-family:'Liberation Serif',serif;font-size:19px;line-height:18px;transform:scaleX(.845)">8.41us</div>
<div class="a" style="left:357px;top:391px;width:120px;text-align:center;font-family:'Liberation Serif',serif;font-size:19px;line-height:18px;transform:scaleX(.845)">1.63us</div>
<div class="a" style="left:783px;top:391px;width:120px;text-align:center;font-family:'Liberation Serif',serif;font-size:19px;line-height:18px;transform:scaleX(.845)">16.79us</div>
<div class="a" style="left:655px;top:441px;width:120px;text-align:center;font-family:'Liberation Serif',serif;font-size:19px;line-height:18px;transform:scaleX(.845)">18.425us</div>
<div class="a" style="left:655px;top:491px;width:120px;text-align:center;font-family:'Liberation Serif',serif;font-size:19px;line-height:18px;transform:scaleX(.845)">52.035us</div>
<div class="a" style="left:655px;top:541px;width:120px;text-align:center;font-family:'Liberation Serif',serif;font-size:19px;line-height:18px;transform:scaleX(.845)">118.78us</div>
<div class="a" style="left:655px;top:591px;width:120px;text-align:center;font-family:'Liberation Serif',serif;font-size:19px;line-height:18px;transform:scaleX(.845)">118.785us</div>
<div class="a" style="left:655px;top:641px;width:120px;text-align:center;font-family:'Liberation Serif',serif;font-size:19px;line-height:18px;transform:scaleX(.845)">163.84us</div>
<div class="a" style="left:655px;top:691px;width:120px;text-align:center;font-family:'Liberation Serif',serif;font-size:19px;line-height:18px;transform:scaleX(.845)">163.84us</div>
<div class="a" style="left:886px;top:183px;width:120px;overflow:hidden"><div style="font-family:'Liberation Serif',serif;font-size:19px;line-height:18px;transform:scaleX(.845);transform-origin:0 0">0X49</div></div>
<div class="a" style="left:960px;top:241px;width:46px;height:20px;overflow:hidden"><div style="position:absolute;left:26px;font-family:'Liberation Serif',serif;font-size:19px;line-height:18px;transform:scaleX(.845);transform-origin:0 0">2.1</div></div>
<div class="a" style="left:1px;top:733px;width:118px;height:16px;background:linear-gradient(#f3f1e9,#fefefb 40%,#fbfbf6)"></div>
<div class="a" style="left:2px;top:733px;width:16px;height:16px;border-radius:2px;border:1px solid #fff;background:linear-gradient(135deg,#dde8fe 0,#c3d5fd 50%,#b4c8f6 100%);box-shadow:inset -1px -1px 0 #a8bde8"></div>
<svg class="a" style="left:0;top:0" width="1024" height="768"><path d="M12.0 737.0 L8.0 741.0 L12.0 745.0" stroke="#4d6185" stroke-width="2.2" fill="none"/></svg>
<div class="a" style="left:18px;top:733px;width:83px;height:16px;border-radius:2px;border:1px solid #fff;background:linear-gradient(180deg,#c9d8fc,#b8cbf8);box-shadow:inset -1px -1px 0 #a5b8e4"></div>
<div class="a" style="left:56px;top:738px;width:1px;height:6px;background:#eef3fe"></div>
<div class="a" style="left:58px;top:738px;width:1px;height:6px;background:#eef3fe"></div>
<div class="a" style="left:60px;top:738px;width:1px;height:6px;background:#eef3fe"></div>
<div class="a" style="left:62px;top:738px;width:1px;height:6px;background:#eef3fe"></div>
<div class="a" style="left:102px;top:733px;width:17px;height:16px;border-radius:2px;border:1px solid #fff;background:linear-gradient(135deg,#dde8fe 0,#c3d5fd 50%,#b4c8f6 100%);box-shadow:inset -1px -1px 0 #a8bde8"></div>
<svg class="a" style="left:0;top:0" width="1024" height="768"><path d="M108.5 737.0 L112.5 741.0 L108.5 745.0" stroke="#4d6185" stroke-width="2.2" fill="none"/></svg>
<div class="a" style="left:124px;top:733px;width:58px;height:16px;background:linear-gradient(#f3f1e9,#fefefb 40%,#fbfbf6)"></div>
<div class="a" style="left:124px;top:733px;width:16px;height:16px;border-radius:2px;border:1px solid #fff;background:linear-gradient(135deg,#dde8fe 0,#c3d5fd 50%,#b4c8f6 100%);box-shadow:inset -1px -1px 0 #a8bde8"></div>
<svg class="a" style="left:0;top:0" width="1024" height="768"><path d="M134.0 737.0 L130.0 741.0 L134.0 745.0" stroke="#4d6185" stroke-width="2.2" fill="none"/></svg>
<div class="a" style="left:141px;top:733px;width:17px;height:16px;border-radius:2px;border:1px solid #fff;background:linear-gradient(180deg,#c9d8fc,#b8cbf8);box-shadow:inset -1px -1px 0 #a5b8e4"></div>
<div class="a" style="left:146px;top:738px;width:1px;height:6px;background:#eef3fe"></div>
<div class="a" style="left:148px;top:738px;width:1px;height:6px;background:#eef3fe"></div>
<div class="a" style="left:150px;top:738px;width:1px;height:6px;background:#eef3fe"></div>
<div class="a" style="left:152px;top:738px;width:1px;height:6px;background:#eef3fe"></div>
<div class="a" style="left:165px;top:733px;width:17px;height:16px;border-radius:2px;border:1px solid #fff;background:linear-gradient(135deg,#dde8fe 0,#c3d5fd 50%,#b4c8f6 100%);box-shadow:inset -1px -1px 0 #a8bde8"></div>
<svg class="a" style="left:0;top:0" width="1024" height="768"><path d="M171.5 737.0 L175.5 741.0 L171.5 745.0" stroke="#4d6185" stroke-width="2.2" fill="none"/></svg>
<div class="a" style="left:187px;top:733px;width:56px;height:16px;background:linear-gradient(#f3f1e9,#fefefb 40%,#fbfbf6)"></div>
<div class="a" style="left:187px;top:733px;width:16px;height:16px;border-radius:2px;border:1px solid #fff;background:linear-gradient(135deg,#dde8fe 0,#c3d5fd 50%,#b4c8f6 100%);box-shadow:inset -1px -1px 0 #a8bde8"></div>
<svg class="a" style="left:0;top:0" width="1024" height="768"><path d="M197.0 737.0 L193.0 741.0 L197.0 745.0" stroke="#4d6185" stroke-width="2.2" fill="none"/></svg>
<div class="a" style="left:204px;top:733px;width:17px;height:16px;border-radius:2px;border:1px solid #fff;background:linear-gradient(180deg,#c9d8fc,#b8cbf8);box-shadow:inset -1px -1px 0 #a5b8e4"></div>
<div class="a" style="left:209px;top:738px;width:1px;height:6px;background:#eef3fe"></div>
<div class="a" style="left:211px;top:738px;width:1px;height:6px;background:#eef3fe"></div>
<div class="a" style="left:213px;top:738px;width:1px;height:6px;background:#eef3fe"></div>
<div class="a" style="left:215px;top:738px;width:1px;height:6px;background:#eef3fe"></div>
<div class="a" style="left:226px;top:733px;width:17px;height:16px;border-radius:2px;border:1px solid #fff;background:linear-gradient(135deg,#dde8fe 0,#c3d5fd 50%,#b4c8f6 100%);box-shadow:inset -1px -1px 0 #a8bde8"></div>
<svg class="a" style="left:0;top:0" width="1024" height="768"><path d="M232.5 737.0 L236.5 741.0 L232.5 745.0" stroke="#4d6185" stroke-width="2.2" fill="none"/></svg>
<div class="a" style="left:247px;top:733px;width:759px;height:16px;background:linear-gradient(#f3f1e9,#fefefb 40%,#fbfbf6)"></div>
<div class="a" style="left:248px;top:733px;width:16px;height:16px;border-radius:2px;border:1px solid #fff;background:linear-gradient(135deg,#dde8fe 0,#c3d5fd 50%,#b4c8f6 100%);box-shadow:inset -1px -1px 0 #a8bde8"></div>
<svg class="a" style="left:0;top:0" width="1024" height="768"><path d="M258.0 737.0 L254.0 741.0 L258.0 745.0" stroke="#4d6185" stroke-width="2.2" fill="none"/></svg>
<div class="a" style="left:274px;top:733px;width:7px;height:16px;border-radius:2px;border:1px solid #fff;background:linear-gradient(180deg,#c9d8fc,#b8cbf8);box-shadow:inset -1px -1px 0 #a5b8e4"></div>
<div class="a" style="left:990px;top:733px;width:16px;height:16px;border-radius:2px;border:1px solid #fff;background:linear-gradient(135deg,#dde8fe 0,#c3d5fd 50%,#b4c8f6 100%);box-shadow:inset -1px -1px 0 #a8bde8"></div>
<svg class="a" style="left:0;top:0" width="1024" height="768"><path d="M996.0 737.0 L1000.0 741.0 L996.0 745.0" stroke="#4d6185" stroke-width="2.2" fill="none"/></svg>
<div class="a" style="left:1006px;top:137px;width:17px;height:596px;background:linear-gradient(90deg,#f3f1e9,#fefefb 40%,#f4f3ee)"></div>
<div class="a" style="left:1007px;top:138px;width:16px;height:17px;border-radius:2px;border:1px solid #fff;background:linear-gradient(135deg,#dde8fe 0,#c3d5fd 50%,#b4c8f6 100%);box-shadow:inset -1px -1px 0 #a8bde8"></div>
<svg class="a" style="left:0;top:0" width="1024" height="768"><path d="M1011.0 148.5 L1015.0 144.5 L1019.0 148.5" stroke="#4d6185" stroke-width="2.2" fill="none"/></svg>
<div class="a" style="left:1007px;top:156px;width:16px;height:186px;border-radius:2px;border:1px solid #fff;background:linear-gradient(90deg,#c9d8fc,#b8cbf8);box-shadow:inset -1px -1px 0 #a5b8e4"></div>
<div class="a" style="left:1012px;top:246px;width:6px;height:1px;background:#eef3fe"></div>
<div class="a" style="left:1012px;top:248px;width:6px;height:1px;background:#eef3fe"></div>
<div class="a" style="left:1012px;top:250px;width:6px;height:1px;background:#eef3fe"></div>
<div class="a" style="left:1012px;top:252px;width:6px;height:1px;background:#eef3fe"></div>
<div class="a" style="left:1007px;top:715px;width:16px;height:17px;border-radius:2px;border:1px solid #fff;background:linear-gradient(135deg,#dde8fe 0,#c3d5fd 50%,#b4c8f6 100%);box-shadow:inset -1px -1px 0 #a8bde8"></div>
<svg class="a" style="left:0;top:0" width="1024" height="768"><path d="M1011.0 721.5 L1015.0 725.5 L1019.0 721.5" stroke="#4d6185" stroke-width="2.2" fill="none"/></svg>
<div class="a" style="left:1006px;top:733px;width:17px;height:16px;background:#ece9d8"></div>
<div class="a" style="left:1023px;top:137px;width:1px;height:612px;background:#aca899"></div>
<div class="a" style="left:0;top:749px;width:1024px;height:1px;background:#aca899"></div>
<div class="a" style="left:2px;top:752px;font-size:12px;line-height:14px">就緒</div>
<div class="a" style="left:479px;top:752px;width:388px;height:14px;border-left:1px solid #aca899;border-top:1px solid #aca899;border-right:1px solid #fff"></div>
<div class="a" style="left:870px;top:752px;width:65px;height:14px;border-left:1px solid #aca899;border-top:1px solid #aca899;border-right:1px solid #fff"></div>
<div class="a" style="left:938px;top:752px;width:85px;height:14px;border-left:1px solid #aca899;border-top:1px solid #aca899;border-right:1px solid #fff"></div>
<div class="a" style="left:872px;top:752px;font-size:12px;line-height:14px">停止!</div>
<div class="a" style="left:940px;top:752px;font-size:12px;line-height:14px">一般模式</div>
<div class="a" style="left:0;top:766px;width:1024px;height:2px;background:#3168d5"></div>
<div class="a" style="left:406px;top:78px;width:118px;height:46px;border:5px solid #f50c0c;border-radius:2px"></div>
<div class="a" style="left:270px;top:122px;width:298px;height:612px;border:5px solid #f50c0c;border-radius:2px"></div>
</body></html>
